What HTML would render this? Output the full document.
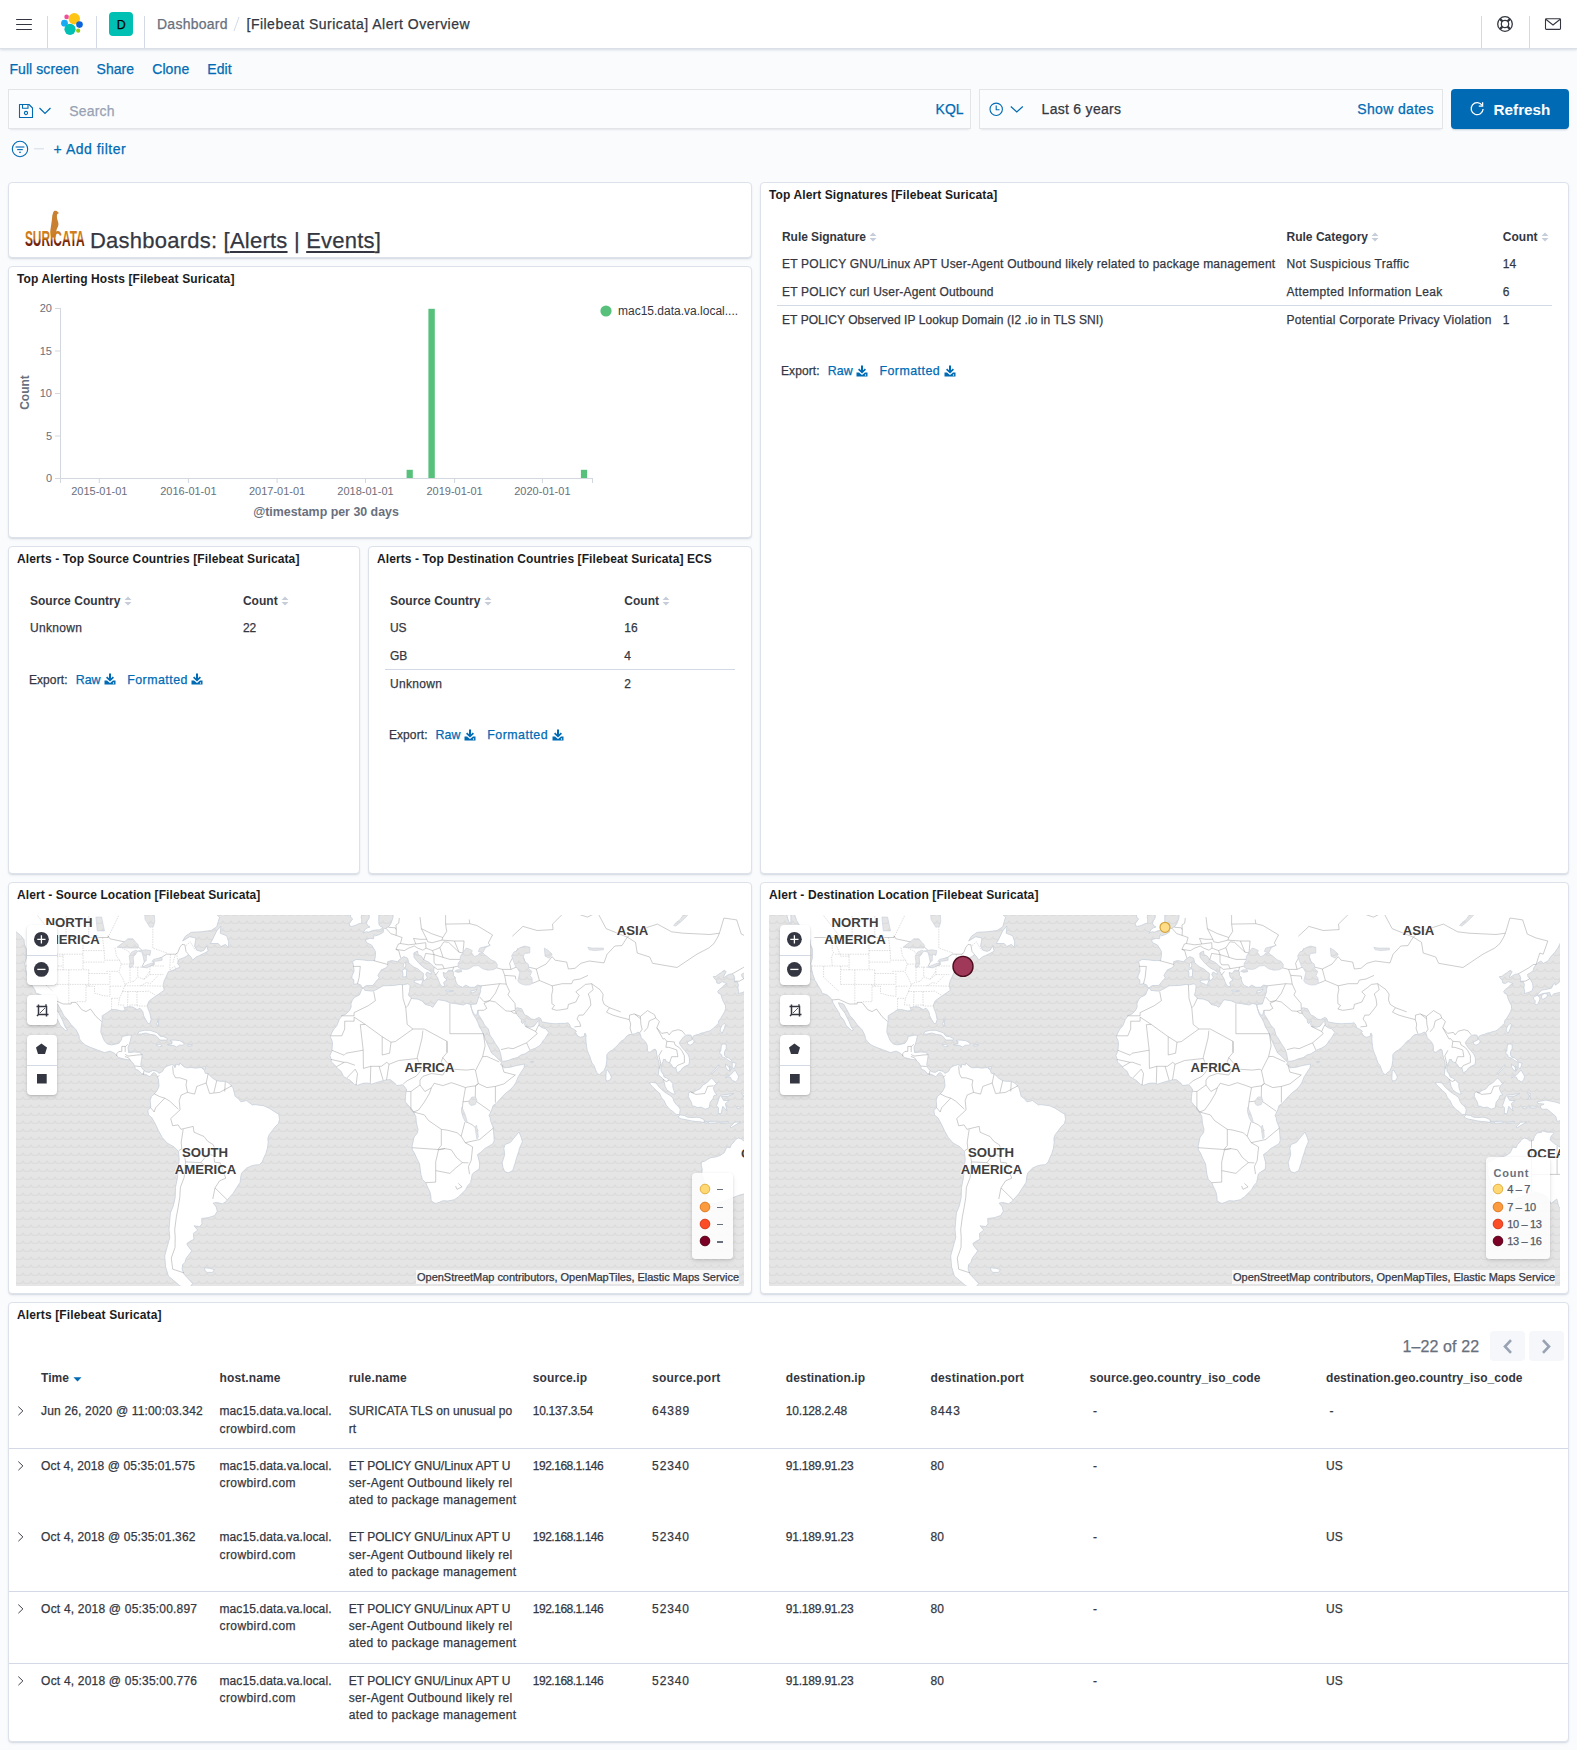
<!DOCTYPE html>
<html><head><meta charset="utf-8">
<style>
html,body{margin:0;padding:0;}
body{width:1577px;height:1750px;overflow:hidden;background:#fafbfd;font-family:"Liberation Sans", sans-serif;position:relative;color:#343741;}
.t{position:absolute;white-space:nowrap;} .r{-webkit-text-stroke:0.25px currentColor;}
.panel{position:absolute;box-sizing:border-box;background:#fff;border:1px solid #dde2ea;border-radius:4px;
box-shadow:0 1px 1px rgba(152,162,179,0.18),0 2px 3px -1px rgba(152,162,179,0.25);}
svg{position:absolute;overflow:visible;}
</style></head><body>

<div style="position:absolute;left:0;top:0;width:1577px;height:49px;background:#fff;border-bottom:1px solid #dbe0e8;box-sizing:border-box;box-shadow:0 1px 2px rgba(152,162,179,0.25),0 2px 3px -1px rgba(152,162,179,0.15)"></div>
<div style="position:absolute;left:16px;top:18.5px;width:16px;height:1.6px;background:#343741;border-radius:1px"></div>
<div style="position:absolute;left:16px;top:23.5px;width:16px;height:1.6px;background:#343741;border-radius:1px"></div>
<div style="position:absolute;left:16px;top:28.5px;width:16px;height:1.6px;background:#343741;border-radius:1px"></div>
<div style="position:absolute;left:47px;top:16px;width:1px;height:32px;background:#d3dae6"></div>
<div style="position:absolute;left:96px;top:16px;width:1px;height:32px;background:#d3dae6"></div>
<div style="position:absolute;left:144px;top:16px;width:1px;height:32px;background:#d3dae6"></div>
<div style="position:absolute;left:1481px;top:16px;width:1px;height:32px;background:#d3dae6"></div>
<div style="position:absolute;left:1529px;top:16px;width:1px;height:32px;background:#d3dae6"></div>
<svg style="left:0;top:0" width="100" height="48">
<circle cx="74.3" cy="18.8" r="5.7" fill="#fec514"/>
<circle cx="66.6" cy="16.9" r="2.3" fill="#f04e98"/>
<circle cx="64.5" cy="23.2" r="3.4" fill="#1ba9f5"/>
<circle cx="79.5" cy="24.6" r="3.3" fill="#0b64dd"/>
<circle cx="70.0" cy="29.3" r="5.6" fill="#00bfb3"/>
<circle cx="78.2" cy="30.7" r="2.1" fill="#93c90e"/>
</svg>
<div style="position:absolute;left:109px;top:12px;width:24px;height:24px;background:#00bfb3;border-radius:4px"></div>
<div class="t r" style="left:121.3px;top:18.5px;font-size:12.4px;line-height:12.4px;color:#000;transform:translateX(-50%);">D</div>
<div class="t r" style="left:157.0px;top:17.1px;font-size:14px;line-height:14px;color:#69707d;letter-spacing:0.252px;">Dashboard</div>
<svg style="left:230px;top:14px" width="12" height="20"><line x1="9" y1="3" x2="4" y2="17" stroke="#d3dae6" stroke-width="1"/></svg>
<div class="t r" style="left:246.5px;top:17.1px;font-size:14px;line-height:14px;color:#343741;letter-spacing:0.489px;">[Filebeat Suricata] Alert Overview</div>
<svg style="left:1495px;top:14px" width="20" height="20" viewBox="0 0 20 20">
<circle cx="10" cy="10" r="7.3" fill="none" stroke="#343741" stroke-width="1.3"/>
<circle cx="10" cy="10" r="3.7" fill="none" stroke="#343741" stroke-width="1.3"/>
<g stroke="#343741" stroke-width="2.2"><line x1="4.9" y1="4.9" x2="7.4" y2="7.4"/><line x1="15.1" y1="4.9" x2="12.6" y2="7.4"/><line x1="4.9" y1="15.1" x2="7.4" y2="12.6"/><line x1="15.1" y1="15.1" x2="12.6" y2="12.6"/></g>
</svg>
<svg style="left:1543px;top:14px" width="20" height="20" viewBox="0 0 20 20">
<rect x="2.5" y="4.8" width="15" height="10.6" rx="0.8" fill="none" stroke="#343741" stroke-width="1.1"/>
<polyline points="2.8,5.2 10,11 17.2,5.2" fill="none" stroke="#343741" stroke-width="1.1"/>
</svg>
<div class="t r" style="left:9.4px;top:62.1px;font-size:14px;line-height:14px;color:#006bb4;letter-spacing:0.083px;">Full screen</div>
<div class="t r" style="left:96.6px;top:62.1px;font-size:14px;line-height:14px;color:#006bb4;letter-spacing:0.01px;">Share</div>
<div class="t r" style="left:152.2px;top:62.1px;font-size:14px;line-height:14px;color:#006bb4;letter-spacing:0.106px;">Clone</div>
<div class="t r" style="left:207.3px;top:62.1px;font-size:14px;line-height:14px;color:#006bb4;letter-spacing:0.059px;">Edit</div>
<div style="position:absolute;left:8px;top:89px;width:963px;height:40px;box-sizing:border-box;background:#fbfcfd;border-radius:0;box-shadow:0 1px 1px -1px rgba(152,162,179,0.2),0 3px 2px -2px rgba(152,162,179,0.2),inset 0 0 0 1px rgba(16,22,26,0.1)"></div>
<svg style="left:18px;top:103px" width="36" height="16" viewBox="0 0 36 16">
<path d="M1.5 1.5 H11 L14.5 5 V14.5 H1.5 Z" fill="none" stroke="#006bb4" stroke-width="1.1" stroke-linejoin="round"/>
<path d="M4.5 1.5 V5.2 H10 V1.5" fill="none" stroke="#006bb4" stroke-width="1.1"/>
<circle cx="8" cy="10" r="1.6" fill="none" stroke="#006bb4" stroke-width="1.1"/>
<polyline points="21.5,5 27,10.5 32.5,5" fill="none" stroke="#006bb4" stroke-width="1.2"/>
</svg>
<div class="t r" style="left:69.3px;top:103.9px;font-size:14px;line-height:14px;color:#98a2b3;letter-spacing:0.168px;">Search</div>
<div class="t r" style="left:935.6px;top:101.9px;font-size:14px;line-height:14px;color:#006bb4;">KQL</div>
<div style="position:absolute;left:979px;top:89px;width:464px;height:40px;box-sizing:border-box;background:#fbfcfd;box-shadow:0 1px 1px -1px rgba(152,162,179,0.2),0 3px 2px -2px rgba(152,162,179,0.2),inset 0 0 0 1px rgba(16,22,26,0.1)"></div>
<svg style="left:988px;top:101px" width="40" height="17" viewBox="0 0 40 17">
<circle cx="8.2" cy="8.3" r="6.2" fill="none" stroke="#006bb4" stroke-width="1.1"/>
<polyline points="8.2,4.5 8.2,8.8 11.5,8.8" fill="none" stroke="#006bb4" stroke-width="1.1"/>
<polyline points="22.8,5.5 28.8,11 34.8,5.5" fill="none" stroke="#006bb4" stroke-width="1.2"/>
</svg>
<div class="t r" style="left:1041.6px;top:101.9px;font-size:14px;line-height:14px;color:#343741;letter-spacing:0.285px;">Last 6 years</div>
<div class="t r" style="left:1357.3px;top:101.9px;font-size:14px;line-height:14px;color:#006bb4;letter-spacing:0.338px;">Show dates</div>
<div style="position:absolute;left:1451px;top:89px;width:118px;height:40px;background:#006bb4;border-radius:4px;box-shadow:0 2px 2px -1px rgba(54,97,126,0.3)"></div>
<svg style="left:1468px;top:100px" width="18" height="18" viewBox="0 0 18 18">
<path d="M14.2 5.5 A6 6 0 1 0 15.1 9" fill="none" stroke="#fff" stroke-width="1.3"/>
<polyline points="14.6,2.3 14.6,6.2 10.8,6.2" fill="none" stroke="#fff" stroke-width="1.3"/>
</svg>
<div class="t" style="left:1493.6px;top:101.5px;font-size:15.3px;line-height:15.3px;font-weight:700;color:#fff;letter-spacing:-0.028px;">Refresh</div>
<svg style="left:10px;top:139px" width="40" height="20" viewBox="0 0 40 20">
<circle cx="10" cy="10" r="7.7" fill="none" stroke="#006bb4" stroke-width="1.1"/>
<line x1="5.6" y1="8" x2="14.4" y2="8" stroke="#006bb4" stroke-width="1.1"/>
<line x1="7.2" y1="10.6" x2="12.8" y2="10.6" stroke="#006bb4" stroke-width="1.1"/>
<line x1="9" y1="13.2" x2="11" y2="13.2" stroke="#006bb4" stroke-width="1.1"/>
<line x1="24" y1="9.8" x2="34" y2="9.8" stroke="#d3dae6" stroke-width="1"/>
</svg>
<div class="t r" style="left:53.6px;top:142.1px;font-size:14px;line-height:14px;color:#006bb4;letter-spacing:0.496px;">+ Add filter</div>
<div class="panel" style="left:8px;top:182px;width:744px;height:76px"></div>
<div class="panel" style="left:8px;top:266px;width:744px;height:272px"></div>
<div class="panel" style="left:760px;top:182px;width:809px;height:692px"></div>
<div class="panel" style="left:8px;top:546px;width:352px;height:328px"></div>
<div class="panel" style="left:368px;top:546px;width:384px;height:328px"></div>
<div class="panel" style="left:8px;top:882px;width:744px;height:412px"></div>
<div class="panel" style="left:760px;top:882px;width:809px;height:412px"></div>
<div class="panel" style="left:8px;top:1302px;width:1561px;height:440px"></div>
<svg style="left:20px;top:205px" width="70" height="46" viewBox="0 0 70 46">
<defs><linearGradient id="sg" x1="0" y1="0" x2="0" y2="1">
<stop offset="0" stop-color="#d98a26"/><stop offset="0.5" stop-color="#c77418"/><stop offset="0.62" stop-color="#7a2a0c"/><stop offset="1" stop-color="#5e0f06"/></linearGradient></defs>
<path d="M33.2 7.5 C33.5 5.8 35.5 5.4 37 6.2 L38.9 7.9 L37.2 9.3 C36.7 11 36.8 13 37.7 15.8 C38.9 18.5 38.7 21 37.1 23.2 C36.4 25 36 28 35.6 30 L35.3 32.5 L31.2 32.5 C30.5 29 30 26 30.7 23 C31.4 19 32.1 14 32.3 10.5 Z" fill="#c98030"/>
<text x="4.9" y="41" font-family="Liberation Sans" font-weight="700" font-size="22.5" textLength="59.8" lengthAdjust="spacingAndGlyphs" fill="url(#sg)">SURICATA</text>
</svg>
<div class="t r" style="left:90.0px;top:230.2px;font-size:22px;line-height:22px;color:#343741;letter-spacing:0.228px;">Dashboards: [<span style="text-decoration:underline;text-decoration-thickness:1.5px;text-underline-offset:3px">Alerts</span> | <span style="text-decoration:underline;text-decoration-thickness:1.5px;text-underline-offset:3px">Events</span>]</div>
<div class="t" style="left:17.0px;top:272.6px;font-size:12px;line-height:12px;font-weight:700;color:#1a1c21;letter-spacing:0.109px;">Top Alerting Hosts [Filebeat Suricata]</div>
<svg style="left:0;top:0" width="760" height="540"><line x1="60.5" y1="308" x2="60.5" y2="483" stroke="#d3d7de" stroke-width="1"/><line x1="60" y1="478.5" x2="593" y2="478.5" stroke="#d3d7de" stroke-width="1"/><line x1="55" y1="308.5" x2="60" y2="308.5" stroke="#d3d7de" stroke-width="1"/><text x="52" y="312" text-anchor="end" font-family="Liberation Sans" font-size="11" fill="#69707d">20</text><line x1="55" y1="351.0" x2="60" y2="351.0" stroke="#d3d7de" stroke-width="1"/><text x="52" y="354.5" text-anchor="end" font-family="Liberation Sans" font-size="11" fill="#69707d">15</text><line x1="55" y1="393.5" x2="60" y2="393.5" stroke="#d3d7de" stroke-width="1"/><text x="52" y="397" text-anchor="end" font-family="Liberation Sans" font-size="11" fill="#69707d">10</text><line x1="55" y1="436.0" x2="60" y2="436.0" stroke="#d3d7de" stroke-width="1"/><text x="52" y="439.5" text-anchor="end" font-family="Liberation Sans" font-size="11" fill="#69707d">5</text><line x1="55" y1="478.5" x2="60" y2="478.5" stroke="#d3d7de" stroke-width="1"/><text x="52" y="482" text-anchor="end" font-family="Liberation Sans" font-size="11" fill="#69707d">0</text><line x1="99.3" y1="478" x2="99.3" y2="483" stroke="#d3d7de" stroke-width="1"/><text x="99.3" y="495" text-anchor="middle" font-family="Liberation Sans" font-size="11" fill="#69707d">2015-01-01</text><line x1="188.4" y1="478" x2="188.4" y2="483" stroke="#d3d7de" stroke-width="1"/><text x="188.4" y="495" text-anchor="middle" font-family="Liberation Sans" font-size="11" fill="#69707d">2016-01-01</text><line x1="277.1" y1="478" x2="277.1" y2="483" stroke="#d3d7de" stroke-width="1"/><text x="277.1" y="495" text-anchor="middle" font-family="Liberation Sans" font-size="11" fill="#69707d">2017-01-01</text><line x1="365.5" y1="478" x2="365.5" y2="483" stroke="#d3d7de" stroke-width="1"/><text x="365.5" y="495" text-anchor="middle" font-family="Liberation Sans" font-size="11" fill="#69707d">2018-01-01</text><line x1="454.6" y1="478" x2="454.6" y2="483" stroke="#d3d7de" stroke-width="1"/><text x="454.6" y="495" text-anchor="middle" font-family="Liberation Sans" font-size="11" fill="#69707d">2019-01-01</text><line x1="542.4" y1="478" x2="542.4" y2="483" stroke="#d3d7de" stroke-width="1"/><text x="542.4" y="495" text-anchor="middle" font-family="Liberation Sans" font-size="11" fill="#69707d">2020-01-01</text><line x1="592.5" y1="478" x2="592.5" y2="483" stroke="#d3d7de" stroke-width="1"/><text x="326" y="516" text-anchor="middle" font-family="Liberation Sans" font-size="12.4" font-weight="700" fill="#69707d">@timestamp per 30 days</text><text transform="translate(29.3,392.5) rotate(-90)" text-anchor="middle" font-family="Liberation Sans" font-size="12" font-weight="700" fill="#69707d">Count</text><rect x="406.6" y="469.8" width="6.199999999999989" height="8.199999999999989" fill="#57c17b"/><rect x="428.4" y="308.8" width="6.400000000000034" height="169.2" fill="#57c17b"/><rect x="580.9" y="469.8" width="6.2000000000000455" height="8.199999999999989" fill="#57c17b"/><circle cx="606" cy="311" r="5.6" fill="#57c17b"/><text x="618" y="315" font-family="Liberation Sans" font-size="12" fill="#343741">mac15.data.va.local....</text></svg>
<div class="t" style="left:769.0px;top:188.6px;font-size:12px;line-height:12px;font-weight:700;color:#1a1c21;letter-spacing:0.107px;">Top Alert Signatures [Filebeat Suricata]</div>
<div class="t" style="left:782.0px;top:230.8px;font-size:12px;line-height:12px;font-weight:700;color:#343741;letter-spacing:-0.052px;">Rule Signature</div>
<svg style="left:869px;top:231.8px" width="8" height="10" viewBox="0 0 8 10"><path d="M0.5 4 L4 0.5 L7.5 4 Z M0.5 6 L4 9.5 L7.5 6 Z" fill="#c6cdd9"/></svg>
<div class="t" style="left:1286.5px;top:230.8px;font-size:12px;line-height:12px;font-weight:700;color:#343741;letter-spacing:0.013px;">Rule Category</div>
<svg style="left:1371px;top:231.8px" width="8" height="10" viewBox="0 0 8 10"><path d="M0.5 4 L4 0.5 L7.5 4 Z M0.5 6 L4 9.5 L7.5 6 Z" fill="#c6cdd9"/></svg>
<div class="t" style="left:1502.8px;top:230.8px;font-size:12px;line-height:12px;font-weight:700;color:#343741;letter-spacing:0.037px;">Count</div>
<svg style="left:1540.5px;top:231.8px" width="8" height="10" viewBox="0 0 8 10"><path d="M0.5 4 L4 0.5 L7.5 4 Z M0.5 6 L4 9.5 L7.5 6 Z" fill="#c6cdd9"/></svg>
<div class="t r" style="left:782.0px;top:257.7px;font-size:12px;line-height:12px;color:#343741;letter-spacing:0.223px;">ET POLICY GNU/Linux APT User-Agent Outbound likely related to package management</div>
<div class="t r" style="left:1286.5px;top:257.7px;font-size:12px;line-height:12px;color:#343741;letter-spacing:0.323px;">Not Suspicious Traffic</div>
<div class="t r" style="left:1502.8px;top:257.7px;font-size:12px;line-height:12px;color:#343741;">14</div>
<div class="t r" style="left:782.0px;top:285.7px;font-size:12px;line-height:12px;color:#343741;letter-spacing:0.197px;">ET POLICY curl User-Agent Outbound</div>
<div class="t r" style="left:1286.5px;top:285.7px;font-size:12px;line-height:12px;color:#343741;letter-spacing:0.335px;">Attempted Information Leak</div>
<div class="t r" style="left:1502.8px;top:285.7px;font-size:12px;line-height:12px;color:#343741;">6</div>
<div class="t r" style="left:782.0px;top:313.7px;font-size:12px;line-height:12px;color:#343741;letter-spacing:0.061px;">ET POLICY Observed IP Lookup Domain (I2 .io in TLS SNI)</div>
<div class="t r" style="left:1286.5px;top:313.7px;font-size:12px;line-height:12px;color:#343741;letter-spacing:0.269px;">Potential Corporate Privacy Violation</div>
<div class="t r" style="left:1502.8px;top:313.7px;font-size:12px;line-height:12px;color:#343741;">1</div>
<div style="position:absolute;left:777px;top:305px;width:775px;height:1px;background:#d3dae6"></div>
<div class="t r" style="left:781.0px;top:365.3px;font-size:12px;line-height:12px;color:#343741;letter-spacing:0.097px;">Export:</div>
<div class="t r" style="left:827.8px;top:365.1px;font-size:12.4px;line-height:12.4px;color:#006bb4;">Raw</div>
<svg style="left:856.3px;top:364.7px" width="12" height="12" viewBox="0 0 12 12"><path d="M5 0.5 H7 V5.2 L8.8 3.5 L10 4.7 L6 8.5 L2 4.7 L3.2 3.5 L5 5.2 Z" fill="#006bb4"/><path d="M0.5 7.5 H3 L6 10 L9 7.5 H11.5 V11.5 H0.5 Z" fill="#006bb4"/><circle cx="9.5" cy="10" r="0.7" fill="#fff"/></svg>
<div class="t r" style="left:879.4px;top:365.1px;font-size:12.4px;line-height:12.4px;color:#006bb4;letter-spacing:0.474px;">Formatted</div>
<svg style="left:943.6px;top:364.7px" width="12" height="12" viewBox="0 0 12 12"><path d="M5 0.5 H7 V5.2 L8.8 3.5 L10 4.7 L6 8.5 L2 4.7 L3.2 3.5 L5 5.2 Z" fill="#006bb4"/><path d="M0.5 7.5 H3 L6 10 L9 7.5 H11.5 V11.5 H0.5 Z" fill="#006bb4"/><circle cx="9.5" cy="10" r="0.7" fill="#fff"/></svg>
<div class="t" style="left:17.0px;top:552.6px;font-size:12px;line-height:12px;font-weight:700;color:#1a1c21;letter-spacing:0.123px;">Alerts - Top Source Countries [Filebeat Suricata]</div>
<div class="t" style="left:29.9px;top:594.8px;font-size:12px;line-height:12px;font-weight:700;color:#343741;letter-spacing:0.045px;">Source Country</div>
<svg style="left:124px;top:595.8px" width="8" height="10" viewBox="0 0 8 10"><path d="M0.5 4 L4 0.5 L7.5 4 Z M0.5 6 L4 9.5 L7.5 6 Z" fill="#c6cdd9"/></svg>
<div class="t" style="left:242.9px;top:594.8px;font-size:12px;line-height:12px;font-weight:700;color:#343741;letter-spacing:0.037px;">Count</div>
<svg style="left:280.5px;top:595.8px" width="8" height="10" viewBox="0 0 8 10"><path d="M0.5 4 L4 0.5 L7.5 4 Z M0.5 6 L4 9.5 L7.5 6 Z" fill="#c6cdd9"/></svg>
<div class="t r" style="left:29.9px;top:622.1px;font-size:12px;line-height:12px;color:#343741;letter-spacing:0.329px;">Unknown</div>
<div class="t r" style="left:242.9px;top:622.1px;font-size:12px;line-height:12px;color:#343741;">22</div>
<div class="t r" style="left:28.9px;top:673.9px;font-size:12px;line-height:12px;color:#343741;letter-spacing:0.097px;">Export:</div>
<div class="t r" style="left:75.7px;top:673.7px;font-size:12.4px;line-height:12.4px;color:#006bb4;">Raw</div>
<svg style="left:104.2px;top:673.3px" width="12" height="12" viewBox="0 0 12 12"><path d="M5 0.5 H7 V5.2 L8.8 3.5 L10 4.7 L6 8.5 L2 4.7 L3.2 3.5 L5 5.2 Z" fill="#006bb4"/><path d="M0.5 7.5 H3 L6 10 L9 7.5 H11.5 V11.5 H0.5 Z" fill="#006bb4"/><circle cx="9.5" cy="10" r="0.7" fill="#fff"/></svg>
<div class="t r" style="left:127.2px;top:673.7px;font-size:12.4px;line-height:12.4px;color:#006bb4;letter-spacing:0.474px;">Formatted</div>
<svg style="left:191.4px;top:673.3px" width="12" height="12" viewBox="0 0 12 12"><path d="M5 0.5 H7 V5.2 L8.8 3.5 L10 4.7 L6 8.5 L2 4.7 L3.2 3.5 L5 5.2 Z" fill="#006bb4"/><path d="M0.5 7.5 H3 L6 10 L9 7.5 H11.5 V11.5 H0.5 Z" fill="#006bb4"/><circle cx="9.5" cy="10" r="0.7" fill="#fff"/></svg>
<div class="t" style="left:377.0px;top:552.6px;font-size:12px;line-height:12px;font-weight:700;color:#1a1c21;letter-spacing:0.099px;">Alerts - Top Destination Countries [Filebeat Suricata] ECS</div>
<div class="t" style="left:389.9px;top:595.0px;font-size:12px;line-height:12px;font-weight:700;color:#343741;letter-spacing:0.045px;">Source Country</div>
<svg style="left:484px;top:596px" width="8" height="10" viewBox="0 0 8 10"><path d="M0.5 4 L4 0.5 L7.5 4 Z M0.5 6 L4 9.5 L7.5 6 Z" fill="#c6cdd9"/></svg>
<div class="t" style="left:624.3px;top:595.0px;font-size:12px;line-height:12px;font-weight:700;color:#343741;letter-spacing:0.037px;">Count</div>
<svg style="left:661.5px;top:596px" width="8" height="10" viewBox="0 0 8 10"><path d="M0.5 4 L4 0.5 L7.5 4 Z M0.5 6 L4 9.5 L7.5 6 Z" fill="#c6cdd9"/></svg>
<div class="t r" style="left:389.9px;top:621.6px;font-size:12px;line-height:12px;color:#343741;">US</div>
<div class="t r" style="left:624.3px;top:621.6px;font-size:12px;line-height:12px;color:#343741;">16</div>
<div class="t r" style="left:389.9px;top:649.6px;font-size:12px;line-height:12px;color:#343741;">GB</div>
<div class="t r" style="left:624.3px;top:649.6px;font-size:12px;line-height:12px;color:#343741;">4</div>
<div class="t r" style="left:389.9px;top:677.6px;font-size:12px;line-height:12px;color:#343741;letter-spacing:0.329px;">Unknown</div>
<div class="t r" style="left:624.3px;top:677.6px;font-size:12px;line-height:12px;color:#343741;">2</div>
<div style="position:absolute;left:385px;top:669px;width:350px;height:1px;background:#d3dae6"></div>
<div class="t r" style="left:388.9px;top:729.4px;font-size:12px;line-height:12px;color:#343741;letter-spacing:0.097px;">Export:</div>
<div class="t r" style="left:435.6px;top:729.2px;font-size:12.4px;line-height:12.4px;color:#006bb4;">Raw</div>
<svg style="left:464.1px;top:728.8px" width="12" height="12" viewBox="0 0 12 12"><path d="M5 0.5 H7 V5.2 L8.8 3.5 L10 4.7 L6 8.5 L2 4.7 L3.2 3.5 L5 5.2 Z" fill="#006bb4"/><path d="M0.5 7.5 H3 L6 10 L9 7.5 H11.5 V11.5 H0.5 Z" fill="#006bb4"/><circle cx="9.5" cy="10" r="0.7" fill="#fff"/></svg>
<div class="t r" style="left:487.3px;top:729.2px;font-size:12.4px;line-height:12.4px;color:#006bb4;letter-spacing:0.474px;">Formatted</div>
<svg style="left:551.5px;top:728.8px" width="12" height="12" viewBox="0 0 12 12"><path d="M5 0.5 H7 V5.2 L8.8 3.5 L10 4.7 L6 8.5 L2 4.7 L3.2 3.5 L5 5.2 Z" fill="#006bb4"/><path d="M0.5 7.5 H3 L6 10 L9 7.5 H11.5 V11.5 H0.5 Z" fill="#006bb4"/><circle cx="9.5" cy="10" r="0.7" fill="#fff"/></svg>
<div class="t" style="left:17.0px;top:888.6px;font-size:12px;line-height:12px;font-weight:700;color:#1a1c21;letter-spacing:0.093px;">Alert - Source Location [Filebeat Suricata]</div>
<div class="t" style="left:769.0px;top:888.6px;font-size:12px;line-height:12px;font-weight:700;color:#1a1c21;letter-spacing:0.114px;">Alert - Destination Location [Filebeat Suricata]</div>
<svg style="left:16px;top:915px" width="728" height="371" viewBox="0 0 728 371">
<defs><pattern id="wvsrc" width="8" height="8" patternUnits="userSpaceOnUse" x="0.05" y="1">
<rect width="8" height="8" fill="#e5e5e5"/>
<path d="M-1.2 4.6 A4 3.1 0 0 0 6.8 4.6 A4 3.1 0 0 0 14.8 4.6" fill="none" stroke="#dcdcdc" stroke-width="1.3"/>
</pattern><clipPath id="clsrc"><rect width="728" height="371"/></clipPath></defs>
<g clip-path="url(#clsrc)">
<rect width="728" height="371" fill="url(#wvsrc)"/>
<path d="M-63.6 -69.4 L-35.2 -31.7 L-21.0 -20.7 L-11.1 -5.2 L-7.4 -0.3 L-5.4 5.4 L-1.1 12.8 L-2.2 15.0 L4.6 20.4 L8.0 24.7 L8.3 29.0 L10.3 33.9 L10.3 43.2 L8.8 48.3 L9.7 54.8 L10.8 59.3 L13.1 65.8 L14.5 67.6 L16.2 70.8 L18.8 74.7 L19.9 78.2 L24.5 79.6 L26.5 80.9 L29.6 84.3 L31.3 88.4 L33.6 92.3 L37.3 98.2 L38.1 100.8 L41.5 104.6 L44.1 110.3 L45.8 111.9 L49.5 115.6 L51.5 115.0 L49.2 111.9 L47.2 106.8 L43.0 98.2 L38.4 92.3 L36.4 87.7 L41.5 89.0 L45.0 95.0 L47.8 100.5 L51.5 104.6 L54.9 109.4 L60.0 114.7 L62.9 120.2 L63.4 123.8 L65.7 126.9 L69.1 129.9 L74.2 132.3 L81.3 134.9 L88.5 137.6 L94.1 136.1 L98.4 138.2 L102.7 142.6 L108.4 144.1 L113.5 144.9 L116.9 147.9 L118.9 151.3 L119.2 154.2 L122.6 155.4 L125.4 158.5 L129.7 159.4 L133.9 161.7 L135.9 159.1 L138.2 157.4 L140.2 159.4 L141.6 162.0 L142.5 164.9 L143.0 171.4 L141.0 175.7 L138.2 179.1 L135.4 181.4 L134.2 185.6 L134.8 192.2 L131.9 195.6 L132.5 199.9 L135.9 202.8 L139.1 208.5 L142.5 215.7 L146.2 222.4 L151.0 228.0 L158.1 231.9 L162.4 236.3 L163.2 243.9 L162.4 253.1 L161.5 262.6 L159.5 272.3 L159.2 282.3 L157.3 290.9 L154.4 298.0 L153.6 307.1 L153.0 314.6 L153.8 322.4 L151.0 332.5 L148.7 340.9 L149.6 351.9 L152.4 361.1 L158.1 365.9 L163.8 370.8 L170.9 373.3 L175.2 370.8 L176.6 368.4 L168.1 359.3 L166.1 354.2 L166.6 349.7 L168.9 347.4 L170.3 343.1 L173.7 338.8 L175.7 335.8 L171.5 330.4 L170.9 328.4 L175.2 325.6 L178.0 324.4 L177.4 318.5 L180.0 316.5 L181.7 315.0 L178.0 310.8 L183.7 311.6 L186.0 308.9 L185.7 303.4 L192.2 302.7 L198.8 300.5 L201.3 296.2 L200.2 291.9 L197.1 288.1 L200.7 287.4 L206.4 288.8 L209.8 286.7 L213.5 282.3 L217.2 278.2 L219.8 273.9 L224.1 267.4 L224.9 261.0 L225.8 257.8 L230.6 253.1 L235.4 250.9 L239.1 250.0 L243.4 249.7 L246.2 246.9 L247.9 242.7 L249.9 238.4 L251.4 233.3 L252.2 227.4 L251.9 223.0 L253.3 219.5 L256.2 215.7 L259.0 212.0 L262.4 208.5 L263.6 204.2 L262.7 199.3 L259.0 197.0 L253.3 193.3 L247.7 190.8 L239.1 189.6 L236.3 189.9 L230.6 185.6 L224.9 186.8 L222.1 183.4 L219.2 181.4 L217.0 172.8 L213.5 168.6 L209.3 166.3 L203.6 166.3 L200.2 165.4 L196.5 163.1 L192.2 158.8 L189.4 158.3 L188.0 154.5 L185.1 152.5 L180.0 153.1 L175.2 152.5 L170.9 152.8 L168.1 151.9 L163.8 147.9 L163.2 150.2 L160.1 149.0 L159.0 152.8 L158.1 150.5 L155.8 149.6 L151.6 151.0 L148.2 153.1 L146.7 156.2 L143.9 158.0 L142.8 158.3 L141.0 156.2 L136.8 155.4 L133.1 157.4 L129.7 156.8 L126.0 153.4 L124.8 149.9 L125.4 145.5 L126.3 139.7 L123.4 137.3 L118.3 137.0 L112.6 137.6 L112.0 132.3 L113.2 129.6 L114.3 126.0 L115.5 120.2 L112.6 120.2 L106.1 121.4 L105.5 124.7 L102.9 128.4 L95.6 129.9 L91.3 129.0 L88.5 126.0 L86.5 121.7 L84.8 117.1 L85.3 110.9 L86.2 106.2 L86.2 100.8 L91.3 97.6 L95.6 94.6 L99.8 94.6 L105.5 95.9 L109.2 95.6 L108.4 92.7 L112.6 91.7 L116.9 92.0 L121.1 94.6 L124.0 93.3 L126.8 96.6 L127.7 100.8 L129.7 104.6 L131.9 108.4 L133.9 108.7 L135.1 104.6 L133.9 98.2 L131.9 93.3 L131.4 90.0 L133.1 86.0 L137.6 82.6 L141.0 80.3 L145.0 77.5 L148.2 75.4 L147.3 69.8 L148.2 65.8 L149.6 62.9 L152.4 56.7 L153.8 56.3 L158.1 54.8 L160.9 53.3 L163.8 52.5 L163.8 51.0 L161.5 48.7 L162.9 44.4 L166.6 43.2 L170.9 41.2 L172.3 39.2 L175.2 42.4 L176.6 45.2 L180.3 42.0 L183.7 40.4 L188.8 38.0 L192.2 36.0 L190.8 31.0 L188.0 35.2 L185.1 36.4 L180.8 35.2 L178.6 31.0 L179.4 26.8 L180.0 23.0 L173.7 21.7 L166.6 26.0 L169.5 21.2 L175.2 17.3 L185.1 16.8 L195.1 15.5 L200.7 11.9 L202.2 6.8 L203.6 2.1 L197.9 -2.8 L189.4 -10.2 L180.8 -20.7 L163.8 -31.7 L78.5 -69.4ZM377.0 -147.5 L377.0 2.6 L376.2 4.9 L375.0 8.2 L373.0 11.4 L369.9 13.2 L367.3 14.1 L367.3 17.3 L363.4 19.5 L359.7 20.8 L358.3 19.5 L357.4 23.8 L354.3 23.4 L349.4 24.7 L350.6 27.7 L355.7 30.2 L357.4 33.1 L359.4 36.4 L359.4 40.8 L358.5 45.6 L352.0 45.6 L346.3 44.8 L340.1 44.4 L336.6 46.4 L337.5 51.0 L338.1 55.9 L336.1 60.7 L335.8 63.3 L337.8 64.8 L337.8 69.4 L341.8 68.7 L344.9 70.1 L345.7 72.6 L347.4 72.6 L350.3 70.5 L356.8 70.5 L359.4 67.3 L361.4 64.8 L363.4 62.9 L361.9 60.4 L365.4 54.8 L369.1 53.3 L371.9 51.0 L371.6 46.7 L375.6 45.6 L381.6 46.7 L384.1 44.0 L387.8 41.6 L391.5 43.2 L392.7 47.5 L394.6 49.5 L397.8 52.1 L402.0 54.0 L404.6 56.3 L407.4 58.5 L407.2 62.6 L407.7 65.8 L410.0 64.4 L411.4 62.2 L409.7 59.6 L411.1 57.0 L415.1 59.3 L415.4 57.4 L412.6 55.2 L408.3 52.9 L406.0 51.0 L402.6 47.9 L398.1 42.4 L397.8 38.0 L401.5 36.0 L402.0 39.6 L405.4 41.2 L407.7 44.8 L412.6 47.1 L415.7 49.5 L418.0 51.8 L417.7 56.3 L419.7 60.0 L421.7 62.9 L423.1 66.9 L424.5 70.1 L426.8 71.6 L428.8 71.2 L427.6 67.6 L429.6 65.8 L431.0 65.1 L428.2 62.2 L427.1 57.4 L430.2 58.5 L432.5 55.2 L436.7 55.5 L437.6 58.2 L437.3 60.4 L439.3 62.2 L439.3 64.8 L440.4 68.0 L442.4 70.5 L446.7 72.3 L449.8 70.1 L453.8 72.3 L458.6 72.3 L461.5 70.1 L465.4 70.8 L464.6 74.4 L464.6 76.5 L463.7 79.2 L462.3 83.3 L461.2 86.7 L460.3 89.0 L454.6 89.4 L455.5 93.7 L457.5 98.2 L460.2 100.7 L460.9 99.2 L462.0 95.0 L462.3 99.5 L463.7 101.4 L466.6 106.2 L468.6 110.0 L472.3 114.0 L474.0 120.2 L477.1 124.7 L479.4 128.7 L482.8 133.7 L484.5 138.2 L485.0 141.1 L485.9 145.5 L486.5 146.4 L489.3 146.1 L492.2 145.5 L496.4 143.8 L501.3 142.6 L505.0 140.0 L509.2 138.8 L511.2 137.3 L514.9 134.9 L520.0 132.9 L523.4 130.8 L525.7 128.1 L527.1 125.7 L529.1 123.5 L532.8 117.4 L529.7 113.7 L526.3 112.8 L523.4 110.9 L522.9 107.8 L523.1 105.3 L522.3 105.9 L520.6 107.8 L518.0 111.2 L514.9 112.2 L511.8 111.9 L509.5 111.5 L508.6 109.4 L509.2 105.9 L508.1 106.2 L506.9 108.7 L505.5 107.5 L505.2 104.6 L503.5 102.7 L501.3 100.1 L500.1 98.2 L499.0 95.3 L499.8 93.3 L501.5 92.7 L503.5 93.3 L505.5 93.7 L507.2 96.9 L508.6 99.8 L512.1 101.4 L515.5 104.0 L518.6 104.6 L521.2 103.3 L522.9 102.4 L524.9 103.7 L525.7 106.8 L529.1 107.5 L532.2 108.1 L537.9 108.7 L540.5 108.7 L544.8 108.4 L549.0 108.4 L552.1 107.8 L553.8 110.0 L554.7 112.8 L556.7 113.7 L557.5 114.0 L560.4 116.2 L559.5 117.4 L561.8 121.1 L564.4 122.3 L568.1 121.4 L568.9 118.0 L570.1 120.2 L569.8 123.8 L570.1 127.5 L570.6 131.7 L571.2 135.2 L572.6 138.8 L573.8 141.4 L574.9 144.9 L576.0 148.1 L578.0 150.5 L579.4 154.2 L580.6 157.4 L583.1 159.7 L585.1 157.7 L587.7 156.2 L589.1 153.1 L590.0 150.5 L590.8 145.5 L590.8 139.7 L593.1 137.0 L596.5 134.9 L599.6 132.3 L602.2 129.6 L605.0 126.3 L608.7 124.1 L610.1 121.7 L613.0 119.6 L615.8 119.3 L619.2 118.7 L622.1 117.1 L623.8 118.0 L624.9 121.1 L625.2 122.6 L627.5 125.1 L629.5 126.9 L631.2 130.2 L631.5 135.8 L632.3 137.0 L634.0 137.3 L636.6 135.2 L639.1 134.0 L640.3 135.8 L640.6 139.1 L641.7 143.2 L643.1 147.9 L643.1 152.5 L642.6 157.1 L642.3 160.0 L644.3 161.4 L647.1 164.0 L648.2 167.1 L649.1 171.4 L650.8 174.8 L654.2 177.4 L657.1 179.1 L659.3 178.8 L657.9 175.7 L656.8 171.7 L656.8 168.6 L653.6 165.1 L650.8 163.1 L648.2 162.0 L647.1 159.1 L645.1 156.2 L644.8 153.1 L646.0 149.0 L647.1 146.4 L647.4 144.4 L649.7 144.6 L649.9 146.4 L653.6 147.9 L655.3 149.6 L657.1 152.5 L659.9 153.1 L661.3 158.0 L665.0 155.4 L666.4 153.1 L669.6 151.0 L673.0 149.6 L673.5 146.1 L673.3 142.6 L671.8 139.1 L668.7 135.5 L666.1 132.6 L663.9 129.3 L663.3 127.5 L665.6 124.4 L668.1 121.4 L671.3 119.9 L675.0 120.2 L676.1 124.1 L677.2 121.1 L679.2 120.2 L682.6 119.3 L685.5 118.0 L687.5 117.7 L691.2 116.5 L694.0 115.9 L696.9 113.7 L699.7 110.9 L702.5 108.4 L702.8 105.6 L704.8 103.3 L706.8 99.8 L708.5 96.9 L709.6 93.7 L709.4 90.4 L707.9 87.7 L706.5 84.7 L704.8 79.2 L702.5 78.2 L701.7 76.5 L703.4 74.4 L706.0 72.6 L708.2 70.1 L711.1 68.7 L708.5 67.6 L706.2 66.6 L703.4 68.4 L700.8 68.0 L700.5 65.8 L697.7 62.6 L697.4 61.5 L699.7 61.5 L702.5 59.3 L705.4 57.4 L708.2 55.2 L710.2 56.7 L708.2 60.0 L707.4 62.9 L708.8 62.2 L710.5 60.7 L713.3 59.3 L716.2 58.9 L717.6 60.0 L718.7 63.3 L718.2 66.9 L721.3 66.9 L722.4 69.4 L721.9 73.0 L722.7 76.5 L722.2 78.5 L725.3 77.8 L728.1 76.8 L730.4 75.4 L731.0 72.3 L730.7 68.7 L728.7 64.8 L725.9 61.5 L725.6 59.3 L728.4 57.8 L731.5 55.2 L731.8 52.9 L734.1 49.5 L735.8 47.9 L738.9 46.0 L741.5 48.3 L746.0 46.0 L748.9 41.6 L752.9 37.2 L756.0 32.7 L758.5 27.7 L761.7 23.4 L762.5 16.8 L764.8 7.7 L763.7 2.1 L775.0 -31.7 L775.0 -147.5ZM346.0 73.7 L343.5 79.9 L338.6 82.3 L336.4 85.0 L334.9 89.0 L335.2 91.7 L333.5 95.6 L330.1 98.9 L326.1 100.5 L323.3 104.6 L320.7 110.9 L317.9 114.0 L315.9 117.7 L314.2 121.7 L315.9 125.4 L316.5 127.8 L315.9 135.8 L313.9 140.5 L315.0 143.8 L315.3 147.0 L318.7 149.9 L320.2 151.9 L322.4 154.2 L325.0 156.2 L327.5 161.4 L330.7 163.4 L333.8 165.1 L338.6 169.4 L341.5 170.3 L347.2 168.3 L351.4 168.0 L355.7 169.1 L360.0 167.7 L365.6 166.0 L370.5 164.9 L374.2 164.6 L378.7 168.0 L380.7 170.6 L383.3 170.3 L386.4 169.7 L388.4 171.4 L390.7 174.8 L389.8 178.5 L389.5 181.4 L389.2 186.8 L393.5 191.6 L396.3 194.8 L399.8 201.3 L400.3 207.1 L401.2 211.4 L402.0 214.3 L401.5 217.7 L398.1 222.1 L396.1 231.0 L396.3 234.8 L398.3 237.8 L400.9 243.6 L403.5 248.8 L404.9 259.4 L406.3 264.2 L409.7 267.7 L411.7 272.3 L414.0 277.2 L414.8 280.9 L415.1 285.7 L418.0 287.8 L419.9 288.4 L423.9 287.1 L427.1 285.7 L431.9 286.0 L435.6 285.3 L438.4 284.7 L442.4 281.9 L445.5 278.9 L449.5 274.9 L451.8 270.6 L454.6 267.7 L456.3 259.1 L458.0 257.5 L463.2 254.1 L463.7 250.0 L463.4 246.9 L461.5 239.6 L464.9 237.2 L469.1 233.3 L476.8 228.9 L478.2 225.9 L477.9 220.1 L477.1 212.2 L474.5 205.6 L474.2 202.8 L473.1 200.5 L475.7 195.0 L477.1 190.5 L480.2 188.5 L482.2 186.2 L486.5 181.4 L489.9 178.0 L494.1 174.8 L497.6 171.1 L499.8 167.7 L502.4 161.4 L506.7 154.8 L508.1 152.5 L508.6 149.0 L502.4 150.2 L498.7 151.0 L494.7 152.2 L487.9 152.8 L485.9 149.9 L484.5 149.6 L485.6 147.3 L483.3 144.9 L481.1 142.9 L478.8 140.5 L475.7 138.2 L472.3 130.8 L468.8 123.2 L468.3 120.8 L464.9 114.0 L463.7 112.5 L462.0 107.8 L460.0 103.7 L457.2 99.2 L455.5 93.7 L454.6 89.4 L450.4 88.4 L447.2 90.0 L439.8 88.7 L434.4 88.0 L428.8 85.7 L421.9 84.7 L419.7 88.0 L416.8 92.3 L414.3 90.7 L409.1 89.4 L406.3 86.0 L401.2 84.0 L396.9 83.7 L394.4 82.3 L392.4 79.9 L393.5 76.5 L394.1 70.8 L392.1 68.7 L387.2 69.8 L384.1 69.4 L377.6 70.5 L367.1 70.8 L359.4 75.1 L356.5 76.1 L348.9 75.4 L347.7 73.3ZM503.0 217.0 L505.5 223.0 L506.4 226.8 L503.5 233.3 L502.7 236.6 L500.7 242.4 L499.0 248.5 L496.7 255.6 L492.4 257.8 L488.7 256.6 L487.0 252.5 L486.2 247.6 L488.7 239.6 L487.9 233.3 L489.0 229.5 L494.4 227.4 L499.0 221.8ZM346.9 18.2 L350.0 16.8 L352.8 17.1 L356.5 15.5 L360.0 15.0 L363.7 14.8 L365.6 13.7 L366.8 12.3 L364.5 11.4 L363.4 10.3 L362.8 8.2 L362.8 -2.8 L353.4 -2.8 L353.1 3.0 L351.1 6.3 L350.6 8.7 L352.0 11.0 L354.0 11.9 L351.7 12.8 L349.7 13.7 L346.9 18.2ZM345.7 8.2 L345.7 4.5 L345.2 2.1 L345.7 -0.3 L347.2 -2.8 L345.7 -6.2 L341.8 -6.7 L338.6 -3.7 L334.4 -1.3 L334.7 2.1 L336.6 4.0 L334.9 6.3 L333.2 8.7 L333.8 11.0 L335.8 11.4 L339.2 10.5 L342.9 8.7ZM685.2 250.0 L685.5 246.9 L688.6 246.3 L691.2 244.5 L694.6 242.7 L700.5 241.8 L704.0 240.5 L708.2 237.8 L710.8 232.2 L714.2 232.7 L715.3 229.8 L717.9 227.1 L719.6 224.5 L722.4 223.0 L726.1 224.2 L727.3 225.9 L731.3 225.6 L732.4 221.5 L734.9 218.0 L739.8 217.2 L739.8 215.7 L745.2 217.2 L751.2 217.2 L751.7 218.6 L749.2 221.0 L748.0 224.8 L752.3 228.6 L759.4 233.0 L763.1 233.0 L765.4 219.5 L767.9 213.4 L773.6 223.9 L776.5 230.4 L778.7 237.5 L785.8 241.8 L792.7 252.5 L797.8 256.9 L797.8 275.6 L792.7 285.3 L789.0 298.0 L778.7 303.4 L770.8 302.7 L760.8 298.0 L756.6 291.2 L754.8 284.0 L749.2 288.4 L744.3 281.3 L735.2 277.2 L723.9 279.9 L715.3 283.3 L709.6 285.7 L699.7 288.4 L692.6 288.8 L689.7 286.7 L691.7 280.6 L689.7 272.3 L687.5 263.5 L685.5 259.4 L686.3 254.7ZM121.4 119.0 L123.1 116.5 L128.3 115.3 L133.9 115.3 L141.0 117.7 L143.9 121.1 L147.9 121.7 L151.8 123.8 L151.0 125.1 L143.9 125.1 L141.9 122.6 L139.6 120.2 L133.9 119.3 L129.7 118.0 L125.4 119.0ZM154.1 125.4 L156.1 125.1 L159.0 125.1 L163.8 125.7 L166.6 127.2 L168.3 129.0 L167.2 130.2 L163.5 130.2 L160.4 132.0 L157.8 130.5 L153.8 130.5 L151.3 129.6 L155.8 129.0 L156.1 126.6 L154.1 126.0ZM140.2 129.6 L144.2 129.6 L146.2 131.1 L143.3 131.7 L140.2 130.2ZM171.8 129.3 L176.3 129.6 L176.0 130.8 L171.8 131.1ZM194.2 28.5 L196.5 24.7 L200.7 15.9 L205.0 11.0 L204.2 18.2 L210.7 20.8 L212.7 26.8 L212.4 32.3 L209.3 29.4 L205.0 31.5 L202.2 28.5ZM188.5 352.8 L193.6 353.3 L198.5 354.6 L196.5 357.4 L190.8 357.4 L188.8 355.1ZM140.5 108.7 L141.9 111.9 L142.5 107.8 L141.3 104.3 L143.3 104.6ZM186.8 151.9 L189.7 151.9 L189.4 153.9 L186.8 153.9ZM-15.3 -0.3 L-11.1 -0.3 L-11.1 8.2 L-13.3 6.8ZM386.7 62.2 L390.4 61.5 L390.7 54.8 L389.0 53.7 L386.1 55.2 L387.0 58.5ZM389.0 53.3 L389.8 50.2 L389.5 47.1 L387.5 48.7 L387.2 51.4ZM398.1 65.5 L400.9 65.1 L407.2 64.8 L405.7 68.7 L405.7 70.5 L403.5 69.4 L398.3 67.3ZM429.6 75.4 L431.9 75.1 L437.6 75.8 L436.1 76.5 L431.0 76.8ZM454.6 77.5 L456.6 77.8 L459.5 76.5 L461.2 74.0 L457.8 75.4 L454.9 76.1ZM589.8 165.1 L590.2 156.0 L591.4 154.8 L593.7 158.5 L595.4 162.0 L594.5 164.6 L591.9 166.0ZM633.7 167.1 L640.0 168.0 L643.1 172.0 L647.7 176.3 L650.5 178.3 L653.6 180.2 L656.8 182.8 L657.9 186.2 L660.2 189.6 L663.0 191.9 L664.2 194.5 L663.6 199.3 L660.2 199.6 L657.1 196.7 L653.6 194.2 L650.2 190.2 L648.0 185.6 L645.4 182.5 L643.4 178.0 L640.6 175.7 L637.1 172.3 L634.3 169.4ZM661.9 202.2 L664.2 199.9 L668.4 200.5 L671.5 202.2 L677.0 202.5 L680.4 202.2 L683.2 202.5 L688.0 204.5 L688.3 207.6 L684.1 206.8 L679.8 206.5 L675.5 205.9 L671.3 205.0 L665.6 203.9 L662.7 202.5ZM688.0 205.9 L691.7 206.8 L690.3 207.9ZM692.6 206.5 L701.1 206.2 L701.1 207.9 L692.6 208.2ZM703.4 207.1 L712.5 206.5 L711.9 207.9 L703.7 207.9ZM713.9 212.0 L718.7 207.3 L724.7 206.8 L718.2 210.8 L715.3 212.5ZM672.4 178.3 L674.4 176.8 L677.0 178.0 L679.8 175.7 L684.1 173.7 L686.9 170.0 L690.6 168.0 L692.9 165.7 L695.4 163.1 L697.4 164.6 L700.3 168.6 L701.7 167.7 L698.8 170.3 L697.4 173.1 L698.3 176.3 L700.8 180.0 L698.0 180.5 L696.9 183.7 L694.3 187.1 L693.7 189.6 L693.2 192.8 L689.2 194.2 L685.5 192.2 L681.2 192.5 L678.4 191.3 L676.1 191.0 L675.5 187.6 L673.5 183.9 L672.4 181.7ZM702.3 198.5 L702.5 192.8 L700.5 190.8 L703.4 182.2 L704.8 180.2 L717.9 178.5 L712.5 181.1 L705.4 181.4 L707.7 185.6 L713.3 185.4 L709.4 188.5 L711.1 196.2 L706.8 191.3 L705.1 198.7ZM735.2 186.8 L743.8 185.1 L753.7 187.1 L763.7 190.2 L777.0 195.0 L782.1 199.9 L777.9 205.6 L789.2 212.8 L780.7 211.4 L770.8 208.5 L767.9 209.4 L763.7 209.1 L758.0 205.6 L755.1 206.5 L753.7 201.3 L745.2 194.2 L739.5 194.2 L738.1 190.8 L742.1 189.1 L735.8 188.5ZM725.3 177.7 L728.4 178.5 L727.3 182.2 L725.6 184.5 L729.0 183.4ZM721.0 191.6 L724.4 192.2 L723.9 193.9 L721.0 193.3ZM728.1 191.0 L734.1 191.3 L734.1 193.0 L728.1 192.8ZM705.7 129.3 L707.7 129.0 L710.2 129.3 L710.2 133.4 L708.5 136.7 L708.5 140.2 L710.2 142.3 L712.5 142.9 L715.6 145.5 L714.5 146.7 L712.2 145.2 L709.1 142.9 L705.7 141.7 L706.0 140.2 L704.0 138.8 L703.4 135.8 L704.8 136.4 L705.1 132.0ZM709.6 163.1 L710.2 161.1 L713.9 160.6 L715.0 159.4 L719.0 155.1 L719.9 156.5 L722.7 161.4 L721.6 164.9 L719.6 166.9 L715.6 164.9 L714.5 162.3 L711.9 161.7ZM716.2 147.0 L720.2 148.4 L718.2 153.9 L716.2 151.9ZM709.4 149.0 L713.1 152.2 L713.9 156.5 L711.1 154.5 L709.6 151.9ZM713.6 150.8 L715.6 153.4 L714.5 155.4ZM696.0 159.1 L702.8 151.6 L702.5 149.9 L695.4 158.3ZM704.2 115.6 L706.0 118.7 L708.5 113.1 L709.4 109.4 L708.2 108.4 L706.0 110.6 L704.5 113.4ZM671.5 126.9 L676.7 124.4 L678.4 126.0 L677.0 128.7 L674.1 130.2 L671.8 129.3ZM731.3 82.3 L735.2 80.3 L737.8 82.6 L737.8 85.0 L736.1 88.7 L734.1 90.0 L733.0 88.7 L733.2 85.7 L731.8 84.3ZM739.5 83.3 L740.9 84.3 L744.6 82.3 L745.8 79.2 L742.3 78.5 L739.8 80.3ZM734.9 79.9 L739.8 75.1 L742.3 74.7 L749.4 73.3 L751.4 69.4 L752.9 67.6 L753.1 70.1 L756.6 68.0 L760.8 60.0 L762.5 54.0 L765.1 57.0 L766.5 60.4 L763.7 67.6 L763.1 74.0 L760.5 76.5 L757.4 77.5 L751.7 78.9 L748.9 81.6 L747.7 77.5 L740.9 78.5 L736.1 80.3ZM760.8 52.9 L765.1 49.1 L770.2 51.0 L776.5 46.0 L772.2 42.8 L765.7 37.6 L764.8 45.2 L760.8 47.9ZM514.3 146.7 L517.7 146.4 L516.9 147.6 L514.9 147.6Z" fill="#fff" stroke="#c6cfdb" stroke-width="0.8"/>
<path d="M12.3 22.5 L92.1 22.5 L92.1 20.8 L93.9 23.8 L108.1 26.8 L121.7 31.5 L123.7 33.1 L128.5 38.0 L128.3 47.1 L126.5 50.6 L127.7 52.1 L138.2 49.8 L137.6 45.6 L145.6 42.4 L150.4 39.2 L159.5 39.2 L161.8 37.6 L163.8 32.3 L166.1 29.4 L168.9 29.8 L170.0 36.4 L172.0 38.8M29.9 85.0 L36.7 84.3 L47.2 89.0 L55.2 89.0 L55.2 87.4 L60.0 87.4 L65.7 94.6 L70.0 96.6 L74.5 94.0 L79.9 101.4 L85.6 106.5M100.7 141.1 L100.7 138.8 L102.9 136.4 L105.8 136.4 L105.8 131.4 L109.5 131.4 L111.8 129.3M109.2 131.4 L109.2 137.0M108.9 141.4 L112.6 142.9 L114.6 145.5M109.2 139.4 L112.0 141.1 L121.1 140.0 L126.3 139.7M119.2 151.0 L124.8 151.6M127.1 160.0 L128.0 155.7M143.3 160.3 L141.3 162.3M156.7 151.3 L157.3 158.5 L159.5 162.8 L163.8 162.8 L170.9 165.1 L170.0 170.0 L171.5 177.4 L165.2 180.0 L163.2 185.6 L164.1 194.8M138.2 178.8 L143.9 181.7 L148.7 183.1 L153.8 186.2 L162.4 194.2M134.5 192.5 L138.2 197.0 L139.6 192.8 L148.7 183.1M192.2 158.5 L190.2 168.0 L180.8 171.4 L178.6 179.1 L171.5 177.4M200.7 165.7 L197.9 177.7M209.3 166.6 L208.7 176.5M190.2 168.0 L193.6 178.5 L203.6 177.4 L215.8 170.8M164.1 194.8 L154.7 203.6 L156.7 210.8 L162.1 209.9 L164.9 214.3 L177.2 211.4 L178.0 217.2 L188.0 221.5 L191.7 226.2 L197.3 229.8 L199.3 234.8 L197.9 240.9 L198.5 247.2 L204.4 247.9 L207.6 257.8 L209.8 263.2 L203.6 265.8 L199.0 272.9 L211.0 284.7M167.2 214.3 L165.2 227.4 L165.8 233.6 L162.7 235.7M165.8 233.6 L168.3 239.0 L169.5 246.9 L176.0 247.2 L184.8 247.6 L192.2 238.7 L197.9 240.9M169.5 246.9 L168.9 254.7 L168.1 262.6 L164.4 272.3 L163.8 282.3 L162.1 292.6 L160.4 301.6 L158.7 314.6 L159.2 322.4 L159.0 332.5 L155.3 343.1 L156.7 354.2 L168.1 357.9M184.8 247.6 L199.0 257.2 L207.6 257.8M196.8 284.0 L199.0 272.9M357.7 76.5 L359.4 85.7 L352.3 90.7 L338.1 97.6 L338.1 100.8 L325.3 100.8M338.1 102.1 L338.1 106.2 L328.7 106.2 L328.7 114.0 L325.8 120.8 L314.5 120.8M338.1 102.1 L349.2 109.4 L344.3 109.7 L347.2 135.2 L330.1 138.2 L328.1 140.2 L315.6 135.2M349.2 109.4 L366.2 121.7 L375.0 127.2 L379.3 126.6 L396.9 114.0M386.4 69.8 L387.0 83.3 L389.8 92.7 L391.2 109.4 L396.9 114.0M395.5 83.0 L391.8 90.7 L389.8 92.7M433.9 88.4 L433.9 118.7M433.9 118.7 L467.4 118.7M396.9 114.0 L408.3 114.0 L431.0 126.3 L431.0 137.6 L426.8 142.6 L425.3 146.7 L429.6 155.7 L426.8 160.0 L415.4 158.5 L406.9 161.4 L404.0 165.1 L404.0 170.0 L408.9 176.5 L415.4 172.8M406.9 115.6 L406.0 123.2 L401.2 142.6 L402.6 147.0 L405.4 154.2 L402.6 158.5 L399.8 161.4 L396.3 163.1 L391.2 165.7 L387.2 169.1M373.0 149.3 L382.7 145.5 L401.2 143.5M373.0 149.3 L370.5 164.9M363.1 151.3 L367.1 165.1M354.3 168.3 L354.8 151.3M340.1 170.0 L341.5 158.5 L339.2 154.2 L331.0 162.8M347.2 135.2 L347.4 153.4 L354.8 151.3 L365.4 151.3 L370.8 147.3 L373.0 149.3M366.2 121.7 L366.2 140.0 L373.6 138.2 L375.0 127.2M315.0 144.4 L327.8 147.3 L330.7 147.3 L338.9 150.2M320.2 151.9 L328.1 147.3M431.0 126.3 L431.0 137.6M426.8 142.6 L436.7 154.2 L450.4 155.1 L458.0 154.2 L459.5 155.7 L462.3 168.6 L459.5 170.8 L451.5 172.0M467.4 118.7 L469.1 130.8 L466.6 141.7 L470.8 141.4 L483.3 147.0M466.6 141.7 L459.5 155.7M459.5 170.8 L462.3 168.6 L470.8 172.6 L479.4 171.4 L487.9 168.9 L499.3 160.0 L499.0 160.0 L487.9 157.1 L485.9 149.9M479.4 171.4 L479.4 187.6M459.5 170.8 L459.2 185.6 L474.2 196.2M451.5 172.0 L449.5 172.6 L447.0 186.8 L446.1 195.6 L449.5 206.5 L456.6 209.9M447.0 186.8 L459.2 185.6M397.5 197.0 L408.3 199.9 L412.6 205.6 L425.3 214.3 L431.0 215.1 L441.0 217.7 L445.2 221.2 L448.9 207.1M449.5 172.6 L442.4 170.0 L435.3 167.7 L426.8 170.6 L418.2 168.3 L415.4 172.8 L413.4 178.5 L408.3 187.1 L402.6 195.0 L397.5 197.0M404.0 170.0 L394.9 176.5 L390.7 176.3M394.9 176.5 L394.9 194.2 L397.5 197.0M396.3 232.7 L421.9 234.5 L429.0 233.6M425.3 214.3 L425.3 230.4 L421.9 234.5M409.7 267.7 L419.7 267.1 L419.7 255.6 L419.7 246.9 L422.5 234.8 L429.0 233.6M419.7 255.6 L433.9 258.4 L439.6 253.1 L446.4 247.6 L440.4 242.4 L435.3 234.8 L429.0 233.6M453.5 259.1 L452.4 251.6 L455.2 245.4 L456.6 231.9 L449.2 227.7 L463.7 224.5 L477.7 212.8M446.4 247.6 L452.4 247.9M445.2 221.2 L449.2 227.7M456.6 209.9 L462.3 215.7M442.4 268.4 L446.1 271.9 L441.0 274.3 L439.6 271.0M337.2 51.4 L344.3 51.4 L343.2 62.2 L341.5 68.7M357.7 45.6 L371.9 49.5M369.9 13.2 L374.7 18.6 L380.1 20.4 L386.1 22.5 L384.4 28.5 L382.4 29.0 L379.9 34.4 L382.7 35.6 L384.7 42.8M380.1 20.4 L380.4 14.6 L379.9 10.1 L382.7 8.2 L383.3 3.0M372.5 12.3 L379.3 12.8 L379.9 14.6M384.4 28.5 L392.7 29.8 L399.8 29.0 L397.5 23.4 L404.0 24.3 L410.8 24.3 L405.4 13.7M379.9 34.4 L388.4 35.6 L392.7 33.1 L398.3 31.0 L401.7 33.1M404.0 2.1 L405.4 13.7 L415.4 18.6 L426.8 22.5 L430.7 16.4 L429.6 9.1 L429.6 0.2M399.8 29.0 L409.7 27.7M410.8 24.3 L411.7 26.8 L416.2 27.7 L425.9 25.1 L426.8 22.5M409.7 27.7 L410.0 33.1 L416.5 35.6 L423.9 32.7 L427.9 26.8M401.7 33.1 L406.9 35.2 L410.0 33.1M425.9 25.1 L438.4 26.0 L443.0 37.2 L447.0 38.0M423.9 32.7 L427.1 42.4 L433.9 44.4 L444.1 44.4M427.9 26.8 L432.5 27.3 L443.0 37.2M429.6 9.1 L453.8 8.7 L460.9 10.5 L476.5 19.9 L472.3 28.1 L474.2 30.2M438.4 26.0 L448.1 26.0 L447.0 37.6M416.5 35.6 L418.0 39.6 L427.1 42.4M407.7 44.8 L409.7 38.4 L418.0 39.6 L418.0 47.1 L419.7 49.8 L426.5 49.8 L428.2 53.7 L437.6 52.1 L442.4 51.0M418.0 51.8 L421.4 54.4 L428.2 53.7M419.7 60.0 L422.5 56.3M437.6 52.1 L436.7 55.5M429.6 0.2 L436.7 -7.7 L443.0 -10.7M453.8 8.7 L453.2 4.5M465.4 70.8 L483.6 68.7 L490.2 69.1 L488.7 60.4 L486.5 54.4 L480.8 52.9M490.2 69.1 L493.6 76.5 L491.9 79.9 L499.0 88.4 L499.3 93.7M483.6 68.7 L479.4 78.2 L473.7 85.7 L468.0 86.7 L463.7 82.0M473.7 85.7 L468.0 88.4 L470.8 93.3 L467.7 95.3 L462.3 95.3M499.0 95.3 L495.0 96.3 L489.9 95.9 L479.4 87.0 L473.7 85.7M495.0 96.3 L497.8 98.2 L500.7 98.2M485.0 134.6 L492.2 132.9 L497.0 133.7 L510.6 127.8 L521.2 118.7 L519.7 116.5 L509.5 111.5M510.6 127.8 L513.8 134.9M523.1 109.7 L521.4 112.5 L519.7 116.5M488.7 60.4 L499.3 61.1 L499.8 64.4M486.5 54.4 L495.0 54.4 L493.6 48.3 L496.4 43.2M495.0 54.4 L501.0 51.8M516.3 68.4 L523.4 65.5 L536.2 70.8 L536.8 74.7 L535.7 79.9 L535.9 88.7 L538.5 90.4 L535.9 94.0 L540.5 95.3 L543.6 95.0 L551.6 93.7 L552.4 89.4 L559.8 87.0 L563.2 80.3 L559.8 76.8 L565.5 72.6 L569.5 69.4 L575.7 68.7M536.2 70.8 L546.2 68.7 L555.6 68.7 L557.3 65.1 L564.1 64.0 L572.0 60.4M523.4 65.5 L520.3 54.0 L530.0 49.1 L536.2 41.6 L539.1 45.2 L550.7 47.1 L552.4 54.0 L559.0 53.3 L564.9 48.3 L573.2 46.0 L588.0 47.9 L591.1 39.2 L598.8 31.0 L605.9 30.6 L611.3 22.1M505.5 38.0 L511.2 51.8 L520.3 54.0M496.4 43.2 L502.1 33.1M496.4 21.2 L506.9 11.4 L521.2 15.5 L537.1 14.6 L536.5 9.1 L550.4 -4.7 L571.5 2.1 L581.4 -2.8 L590.2 13.7 L611.3 22.1M611.3 22.1 L618.7 16.4 L641.4 9.1 L655.6 16.8 L667.0 18.2 L694.0 19.5 L703.4 18.2 L701.7 22.1 L698.0 28.5 L692.6 33.1 L680.9 39.2 L661.0 52.5 L636.6 48.3 L633.7 42.0 L621.2 38.0 L619.5 27.3 L611.3 22.1M703.4 18.2 L707.9 3.0 L720.7 4.9 L725.3 19.1 L734.1 23.0 L745.8 26.0 L741.2 39.2 L737.8 38.0 L734.1 49.5M716.2 58.9 L726.7 52.9 L731.5 49.5 L734.1 49.5M718.7 66.2 L723.3 66.2 L727.8 63.7M575.7 68.7 L584.0 74.7 L587.1 79.2 L586.5 85.0 L588.2 89.4 L593.4 92.7 L590.5 97.2 L596.8 100.1 L603.6 102.1 L613.3 104.6 L613.6 100.1 L618.1 98.9 L624.4 101.4 L631.5 95.6 L638.6 99.8 L639.7 103.0 L633.2 105.9 L631.7 112.5 L628.1 116.8M639.7 103.0 L643.4 106.5 L640.8 112.8 L645.7 118.4 L651.4 117.4 L653.1 119.9 L656.2 116.2 L662.2 114.7 L666.1 115.9 L669.3 119.9M575.7 68.7 L577.2 74.7 L572.3 78.9 L574.0 83.7 L574.9 90.0 L572.6 93.3 L567.2 100.1 L562.9 100.1 L561.0 104.0 L563.5 107.2 L564.9 111.2 L558.4 111.9M613.3 104.6 L614.7 109.0 L614.1 113.4 L615.8 118.7M624.4 101.4 L624.9 109.4 L626.1 114.3 L623.8 117.7M640.8 112.8 L647.1 124.1 L648.5 123.5 L650.8 126.3 L649.9 132.3 L652.8 132.3 L660.7 134.9 L661.9 141.7 L655.6 141.7 L653.6 147.9M650.8 126.3 L658.2 126.9 L659.0 129.9 L663.3 132.6 L665.9 135.8 L668.4 140.8 L668.4 147.6 L661.3 150.5 L659.6 153.1M646.0 135.2 L642.8 140.8 L644.8 148.7 L643.4 153.6M647.1 164.3 L650.2 166.6 L653.1 165.1M618.7 99.2 L624.4 103.7M593.4 92.7 L604.7 96.9M674.4 176.8 L679.8 179.4 L688.9 178.5 L691.7 171.4 L697.7 170.8M763.7 190.2 L763.7 209.1M729.5 225.4 L729.5 277.9M755.1 231.0 L755.1 259.4 L729.5 259.4M763.7 259.4 L763.7 299.8M755.1 259.4 L763.7 259.4 L763.7 269.0 L789.2 267.4 L799.2 266.4" fill="none" stroke="#8c8c8c" stroke-width="0.55" stroke-opacity="0.8" stroke-linejoin="round"/>
<path d="M9.7 51.0 L47.2 51.0M21.6 51.0 L21.6 62.2 L37.0 76.5M30.2 22.5 L30.2 35.2 L31.6 37.2 L29.6 42.0 L30.2 51.0M38.6 51.0 L38.6 69.4M47.1 39.2 L47.1 54.8 L38.6 54.8M47.1 41.2 L38.7 41.2 L33.0 26.8 L33.0 22.5M33.0 39.2 L67.1 39.2M67.0 22.5 L67.0 54.8M47.1 54.8 L72.8 54.8M38.7 69.4 L93.9 69.4M52.8 54.8 L52.8 89.0M70.0 69.4 L70.0 86.7 L59.7 86.7M72.7 54.8 L72.7 71.2 L70.0 71.2M72.8 71.2 L78.5 71.2 L78.5 78.2 L87.0 80.6 L94.1 81.3M67.1 35.6 L88.2 35.6M67.1 47.1 L88.5 47.1M72.8 58.5 L91.9 58.5M86.5 22.5 L88.2 35.6 L88.5 45.2 L103.5 45.2M103.5 45.2 L105.2 49.1 L102.9 57.0 L106.4 62.9 L109.2 69.4 L107.8 73.0 L106.6 76.5 L103.5 83.3 L102.4 90.0 L107.8 90.0 L108.1 92.7M90.4 56.3 L102.9 56.3M93.9 71.2 L106.6 71.2M95.6 83.3 L103.5 83.3M95.6 83.3 L95.6 94.3M93.9 71.2 L94.1 81.3M93.9 58.5 L93.9 69.4M114.0 52.1 L114.0 65.8M121.7 52.1 L121.7 61.8M109.5 69.4 L112.6 67.6 L118.3 66.2 L121.7 61.8 L128.0 64.4 L133.7 56.3M108.4 70.8 L130.5 70.8 L147.0 71.2M106.1 76.5 L126.5 76.5M112.0 76.5 L111.5 92.0M120.9 76.5 L121.1 90.0 L113.8 90.0 L114.0 92.3M121.1 90.0 L121.4 91.0 L131.1 91.0M126.5 76.5 L132.8 76.1 L139.6 80.3M133.9 51.0 L148.7 51.0M133.9 59.6 L147.3 59.6M133.9 51.0 L133.9 59.6 L128.0 64.4M124.8 70.8 L130.5 67.6 L134.5 68.4 L141.6 61.1M154.4 39.2 L153.8 54.8M159.5 39.2 L156.7 48.3M160.7 38.0 L161.8 46.7M114.0 52.1 L125.4 52.1M105.2 49.1 L113.2 49.1M99.0 32.7 L100.4 40.8 L103.5 45.2M105.8 32.7 L112.6 36.4 L113.8 38.8M153.8 54.8 L158.7 51.0 L159.5 53.7M50.1 22.5 L50.1 -31.7M72.8 22.5 L72.8 -31.7M21.6 0.6 L38.4 22.5M92.1 22.5 L109.8 -14.3M136.8 11.4 L136.8 33.1 L151.0 38.0M170.0 30.6 L174.3 26.8 L179.4 35.2" fill="none" stroke="#a0a0a0" stroke-width="0.5" stroke-opacity="0.7" stroke-dasharray="1.5 1"/>
<path d="M128.3 -5.2 L129.1 4.5 L131.1 7.7 L133.9 12.3 L137.4 11.4 L138.8 6.8 L138.2 -2.8ZM101.0 32.3 L105.5 32.7 L114.0 33.1 L122.0 33.1 L122.3 29.8 L119.7 27.3 L116.9 23.8 L111.8 23.8 L108.4 26.8 L104.1 29.8ZM113.2 52.1 L114.0 47.1 L113.2 41.2 L115.5 37.2 L119.7 35.2 L121.7 36.0 L119.7 39.2 L117.2 42.0 L117.7 49.1 L116.0 52.1ZM122.0 36.0 L126.0 37.2 L128.3 46.4 L130.2 46.0 L130.5 39.2 L133.9 40.4 L134.8 35.6 L129.7 34.8ZM125.4 52.1 L131.1 52.9 L137.6 49.1 L138.2 47.5 L133.9 48.7 L128.3 51.0ZM135.9 46.4 L142.5 46.0 L146.2 45.2 L145.9 42.4 L142.5 43.2 L137.4 44.4ZM81.3 15.9 L88.5 15.9 L85.6 2.1 L79.9 2.1ZM442.4 52.5 L445.0 54.0 L445.5 54.0 L449.5 54.4 L452.6 54.0 L457.5 51.0 L462.3 50.6 L466.6 53.7 L471.7 55.2 L477.1 54.8 L480.8 52.9 L481.4 49.8 L479.1 46.4 L475.1 44.8 L471.4 41.6 L468.6 39.6 L466.9 38.0 L463.7 38.0 L462.3 40.0 L458.9 41.6 L457.8 40.8 L455.5 37.6 L456.3 35.6 L453.2 33.9 L450.1 33.1 L447.0 37.6 L444.4 41.2 L444.1 45.6 L442.1 48.3ZM462.3 36.4 L466.9 37.6 L469.4 32.7 L474.2 30.2 L471.7 31.0 L463.7 33.1ZM438.7 56.3 L441.0 54.8 L445.2 54.8 L445.8 56.7 L441.8 57.4ZM495.6 40.8 L497.8 47.1 L499.3 51.0 L501.5 53.7 L503.8 57.4 L502.7 62.2 L501.8 65.8 L503.0 67.6 L505.8 69.1 L509.5 70.1 L513.5 69.8 L516.3 68.4 L516.0 62.9 L514.0 60.7 L515.8 56.3 L512.9 54.0 L512.3 49.1 L508.6 46.4 L507.2 41.6 L508.6 38.4 L513.8 38.0 L513.8 32.3 L508.4 31.0 L503.0 33.1 L501.0 36.0 L498.1 36.8ZM528.3 33.1 L532.0 35.2 L536.2 39.2 L533.4 43.2 L529.1 41.2ZM657.6 10.5 L659.9 11.0 L665.6 6.3 L671.3 0.6 L674.1 -7.7 L670.7 -5.2 L664.2 4.5 L659.9 7.7ZM571.8 32.3 L576.0 33.1 L587.4 33.1 L587.4 34.8 L578.9 35.6 L573.2 34.8ZM453.2 185.6 L456.1 181.9 L459.7 182.2 L460.9 185.6 L459.2 189.6 L455.2 190.5 L452.9 188.5ZM445.8 192.2 L447.5 195.6 L449.5 200.7 L451.2 206.5 L449.8 207.3 L447.2 202.8 L445.5 197.0ZM460.3 210.2 L461.7 215.7 L462.3 222.1 L460.9 223.9 L460.0 218.6 L459.2 212.8Z" fill="url(#wvsrc)" stroke="#c6cfdb" stroke-width="0.6"/>
</g></svg>
<svg style="left:769px;top:915px" width="791" height="371" viewBox="0 0 791 371">
<defs><pattern id="wvdst" width="8" height="8" patternUnits="userSpaceOnUse" x="0.95" y="1">
<rect width="8" height="8" fill="#e5e5e5"/>
<path d="M-1.2 4.6 A4 3.1 0 0 0 6.8 4.6 A4 3.1 0 0 0 14.8 4.6" fill="none" stroke="#dcdcdc" stroke-width="1.3"/>
</pattern><clipPath id="cldst"><rect width="791" height="371"/></clipPath></defs>
<g clip-path="url(#cldst)">
<rect width="791" height="371" fill="url(#wvdst)"/>
<path d="M-30.7 -69.4 L-2.2 -31.7 L12.0 -20.7 L21.9 -5.2 L25.6 -0.3 L27.6 5.4 L31.9 12.8 L30.8 15.0 L37.6 20.4 L41.0 24.7 L41.3 29.0 L43.3 33.9 L43.3 43.2 L41.8 48.3 L42.7 54.8 L43.8 59.3 L46.1 65.8 L47.5 67.6 L49.2 70.8 L51.8 74.7 L52.9 78.2 L57.5 79.6 L59.5 80.9 L62.6 84.3 L64.3 88.4 L66.6 92.3 L70.3 98.2 L71.1 100.8 L74.5 104.6 L77.1 110.3 L78.8 111.9 L82.5 115.6 L84.5 115.0 L82.2 111.9 L80.2 106.8 L76.0 98.2 L71.4 92.3 L69.4 87.7 L74.5 89.0 L78.0 95.0 L80.8 100.5 L84.5 104.6 L87.9 109.4 L93.0 114.7 L95.9 120.2 L96.4 123.8 L98.7 126.9 L102.1 129.9 L107.2 132.3 L114.3 134.9 L121.5 137.6 L127.1 136.1 L131.4 138.2 L135.7 142.6 L141.4 144.1 L146.5 144.9 L149.9 147.9 L151.9 151.3 L152.2 154.2 L155.6 155.4 L158.4 158.5 L162.7 159.4 L166.9 161.7 L168.9 159.1 L171.2 157.4 L173.2 159.4 L174.6 162.0 L175.5 164.9 L176.0 171.4 L174.0 175.7 L171.2 179.1 L168.4 181.4 L167.2 185.6 L167.8 192.2 L164.9 195.6 L165.5 199.9 L168.9 202.8 L172.1 208.5 L175.5 215.7 L179.2 222.4 L184.0 228.0 L191.1 231.9 L195.4 236.3 L196.2 243.9 L195.4 253.1 L194.5 262.6 L192.5 272.3 L192.2 282.3 L190.3 290.9 L187.4 298.0 L186.6 307.1 L186.0 314.6 L186.8 322.4 L184.0 332.5 L181.7 340.9 L182.6 351.9 L185.4 361.1 L191.1 365.9 L196.8 370.8 L203.9 373.3 L208.2 370.8 L209.6 368.4 L201.1 359.3 L199.1 354.2 L199.6 349.7 L201.9 347.4 L203.3 343.1 L206.7 338.8 L208.7 335.8 L204.5 330.4 L203.9 328.4 L208.2 325.6 L211.0 324.4 L210.4 318.5 L213.0 316.5 L214.7 315.0 L211.0 310.8 L216.7 311.6 L219.0 308.9 L218.7 303.4 L225.2 302.7 L231.8 300.5 L234.3 296.2 L233.2 291.9 L230.1 288.1 L233.7 287.4 L239.4 288.8 L242.8 286.7 L246.5 282.3 L250.2 278.2 L252.8 273.9 L257.1 267.4 L257.9 261.0 L258.8 257.8 L263.6 253.1 L268.4 250.9 L272.1 250.0 L276.4 249.7 L279.2 246.9 L280.9 242.7 L282.9 238.4 L284.4 233.3 L285.2 227.4 L284.9 223.0 L286.3 219.5 L289.2 215.7 L292.0 212.0 L295.4 208.5 L296.6 204.2 L295.7 199.3 L292.0 197.0 L286.3 193.3 L280.7 190.8 L272.1 189.6 L269.3 189.9 L263.6 185.6 L257.9 186.8 L255.1 183.4 L252.2 181.4 L250.0 172.8 L246.5 168.6 L242.3 166.3 L236.6 166.3 L233.2 165.4 L229.5 163.1 L225.2 158.8 L222.4 158.3 L221.0 154.5 L218.1 152.5 L213.0 153.1 L208.2 152.5 L203.9 152.8 L201.1 151.9 L196.8 147.9 L196.2 150.2 L193.1 149.0 L192.0 152.8 L191.1 150.5 L188.8 149.6 L184.6 151.0 L181.2 153.1 L179.7 156.2 L176.9 158.0 L175.8 158.3 L174.0 156.2 L169.8 155.4 L166.1 157.4 L162.7 156.8 L159.0 153.4 L157.8 149.9 L158.4 145.5 L159.3 139.7 L156.4 137.3 L151.3 137.0 L145.6 137.6 L145.0 132.3 L146.2 129.6 L147.3 126.0 L148.5 120.2 L145.6 120.2 L139.1 121.4 L138.5 124.7 L135.9 128.4 L128.6 129.9 L124.3 129.0 L121.5 126.0 L119.5 121.7 L117.8 117.1 L118.3 110.9 L119.2 106.2 L119.2 100.8 L124.3 97.6 L128.6 94.6 L132.8 94.6 L138.5 95.9 L142.2 95.6 L141.4 92.7 L145.6 91.7 L149.9 92.0 L154.1 94.6 L157.0 93.3 L159.8 96.6 L160.7 100.8 L162.7 104.6 L164.9 108.4 L166.9 108.7 L168.1 104.6 L166.9 98.2 L164.9 93.3 L164.4 90.0 L166.1 86.0 L170.6 82.6 L174.0 80.3 L178.0 77.5 L181.2 75.4 L180.3 69.8 L181.2 65.8 L182.6 62.9 L185.4 56.7 L186.8 56.3 L191.1 54.8 L193.9 53.3 L196.8 52.5 L196.8 51.0 L194.5 48.7 L195.9 44.4 L199.6 43.2 L203.9 41.2 L205.3 39.2 L208.2 42.4 L209.6 45.2 L213.3 42.0 L216.7 40.4 L221.8 38.0 L225.2 36.0 L223.8 31.0 L221.0 35.2 L218.1 36.4 L213.8 35.2 L211.6 31.0 L212.4 26.8 L213.0 23.0 L206.7 21.7 L199.6 26.0 L202.5 21.2 L208.2 17.3 L218.1 16.8 L228.1 15.5 L233.7 11.9 L235.2 6.8 L236.6 2.1 L230.9 -2.8 L222.4 -10.2 L213.8 -20.7 L196.8 -31.7 L111.5 -69.4ZM410.0 -147.5 L410.0 2.6 L409.2 4.9 L408.0 8.2 L406.0 11.4 L402.9 13.2 L400.3 14.1 L400.3 17.3 L396.4 19.5 L392.7 20.8 L391.3 19.5 L390.4 23.8 L387.3 23.4 L382.4 24.7 L383.6 27.7 L388.7 30.2 L390.4 33.1 L392.4 36.4 L392.4 40.8 L391.5 45.6 L385.0 45.6 L379.3 44.8 L373.1 44.4 L369.6 46.4 L370.5 51.0 L371.1 55.9 L369.1 60.7 L368.8 63.3 L370.8 64.8 L370.8 69.4 L374.8 68.7 L377.9 70.1 L378.7 72.6 L380.4 72.6 L383.3 70.5 L389.8 70.5 L392.4 67.3 L394.4 64.8 L396.4 62.9 L394.9 60.4 L398.4 54.8 L402.1 53.3 L404.9 51.0 L404.6 46.7 L408.6 45.6 L414.6 46.7 L417.1 44.0 L420.8 41.6 L424.5 43.2 L425.7 47.5 L427.6 49.5 L430.8 52.1 L435.0 54.0 L437.6 56.3 L440.4 58.5 L440.2 62.6 L440.7 65.8 L443.0 64.4 L444.4 62.2 L442.7 59.6 L444.1 57.0 L448.1 59.3 L448.4 57.4 L445.6 55.2 L441.3 52.9 L439.0 51.0 L435.6 47.9 L431.1 42.4 L430.8 38.0 L434.5 36.0 L435.0 39.6 L438.4 41.2 L440.7 44.8 L445.6 47.1 L448.7 49.5 L451.0 51.8 L450.7 56.3 L452.7 60.0 L454.7 62.9 L456.1 66.9 L457.5 70.1 L459.8 71.6 L461.8 71.2 L460.6 67.6 L462.6 65.8 L464.0 65.1 L461.2 62.2 L460.1 57.4 L463.2 58.5 L465.5 55.2 L469.7 55.5 L470.6 58.2 L470.3 60.4 L472.3 62.2 L472.3 64.8 L473.4 68.0 L475.4 70.5 L479.7 72.3 L482.8 70.1 L486.8 72.3 L491.6 72.3 L494.5 70.1 L498.4 70.8 L497.6 74.4 L497.6 76.5 L496.7 79.2 L495.3 83.3 L494.2 86.7 L493.3 89.0 L487.6 89.4 L488.5 93.7 L490.5 98.2 L493.2 100.7 L493.9 99.2 L495.0 95.0 L495.3 99.5 L496.7 101.4 L499.6 106.2 L501.6 110.0 L505.3 114.0 L507.0 120.2 L510.1 124.7 L512.4 128.7 L515.8 133.7 L517.5 138.2 L518.0 141.1 L518.9 145.5 L519.5 146.4 L522.3 146.1 L525.2 145.5 L529.4 143.8 L534.3 142.6 L538.0 140.0 L542.2 138.8 L544.2 137.3 L547.9 134.9 L553.0 132.9 L556.4 130.8 L558.7 128.1 L560.1 125.7 L562.1 123.5 L565.8 117.4 L562.7 113.7 L559.3 112.8 L556.4 110.9 L555.9 107.8 L556.1 105.3 L555.3 105.9 L553.6 107.8 L551.0 111.2 L547.9 112.2 L544.8 111.9 L542.5 111.5 L541.6 109.4 L542.2 105.9 L541.1 106.2 L539.9 108.7 L538.5 107.5 L538.2 104.6 L536.5 102.7 L534.3 100.1 L533.1 98.2 L532.0 95.3 L532.8 93.3 L534.5 92.7 L536.5 93.3 L538.5 93.7 L540.2 96.9 L541.6 99.8 L545.1 101.4 L548.5 104.0 L551.6 104.6 L554.2 103.3 L555.9 102.4 L557.9 103.7 L558.7 106.8 L562.1 107.5 L565.2 108.1 L570.9 108.7 L573.5 108.7 L577.8 108.4 L582.0 108.4 L585.1 107.8 L586.8 110.0 L587.7 112.8 L589.7 113.7 L590.5 114.0 L593.4 116.2 L592.5 117.4 L594.8 121.1 L597.4 122.3 L601.1 121.4 L601.9 118.0 L603.1 120.2 L602.8 123.8 L603.1 127.5 L603.6 131.7 L604.2 135.2 L605.6 138.8 L606.8 141.4 L607.9 144.9 L609.0 148.1 L611.0 150.5 L612.4 154.2 L613.6 157.4 L616.1 159.7 L618.1 157.7 L620.7 156.2 L622.1 153.1 L623.0 150.5 L623.8 145.5 L623.8 139.7 L626.1 137.0 L629.5 134.9 L632.6 132.3 L635.2 129.6 L638.0 126.3 L641.7 124.1 L643.1 121.7 L646.0 119.6 L648.8 119.3 L652.2 118.7 L655.1 117.1 L656.8 118.0 L657.9 121.1 L658.2 122.6 L660.5 125.1 L662.5 126.9 L664.2 130.2 L664.5 135.8 L665.3 137.0 L667.0 137.3 L669.6 135.2 L672.1 134.0 L673.3 135.8 L673.6 139.1 L674.7 143.2 L676.1 147.9 L676.1 152.5 L675.6 157.1 L675.3 160.0 L677.3 161.4 L680.1 164.0 L681.2 167.1 L682.1 171.4 L683.8 174.8 L687.2 177.4 L690.1 179.1 L692.3 178.8 L690.9 175.7 L689.8 171.7 L689.8 168.6 L686.6 165.1 L683.8 163.1 L681.2 162.0 L680.1 159.1 L678.1 156.2 L677.8 153.1 L679.0 149.0 L680.1 146.4 L680.4 144.4 L682.7 144.6 L682.9 146.4 L686.6 147.9 L688.3 149.6 L690.1 152.5 L692.9 153.1 L694.3 158.0 L698.0 155.4 L699.4 153.1 L702.6 151.0 L706.0 149.6 L706.5 146.1 L706.3 142.6 L704.8 139.1 L701.7 135.5 L699.1 132.6 L696.9 129.3 L696.3 127.5 L698.6 124.4 L701.1 121.4 L704.3 119.9 L708.0 120.2 L709.1 124.1 L710.2 121.1 L712.2 120.2 L715.6 119.3 L718.5 118.0 L720.5 117.7 L724.2 116.5 L727.0 115.9 L729.9 113.7 L732.7 110.9 L735.5 108.4 L735.8 105.6 L737.8 103.3 L739.8 99.8 L741.5 96.9 L742.6 93.7 L742.4 90.4 L740.9 87.7 L739.5 84.7 L737.8 79.2 L735.5 78.2 L734.7 76.5 L736.4 74.4 L739.0 72.6 L741.2 70.1 L744.1 68.7 L741.5 67.6 L739.2 66.6 L736.4 68.4 L733.8 68.0 L733.5 65.8 L730.7 62.6 L730.4 61.5 L732.7 61.5 L735.5 59.3 L738.4 57.4 L741.2 55.2 L743.2 56.7 L741.2 60.0 L740.4 62.9 L741.8 62.2 L743.5 60.7 L746.3 59.3 L749.2 58.9 L750.6 60.0 L751.7 63.3 L751.2 66.9 L754.3 66.9 L755.4 69.4 L754.9 73.0 L755.7 76.5 L755.2 78.5 L758.3 77.8 L761.1 76.8 L763.4 75.4 L764.0 72.3 L763.7 68.7 L761.7 64.8 L758.9 61.5 L758.6 59.3 L761.4 57.8 L764.5 55.2 L764.8 52.9 L767.1 49.5 L768.8 47.9 L771.9 46.0 L774.5 48.3 L779.0 46.0 L781.9 41.6 L785.9 37.2 L789.0 32.7 L791.5 27.7 L794.7 23.4 L795.5 16.8 L797.8 7.7 L796.7 2.1 L808.0 -31.7 L808.0 -147.5ZM379.0 73.7 L376.5 79.9 L371.6 82.3 L369.4 85.0 L367.9 89.0 L368.2 91.7 L366.5 95.6 L363.1 98.9 L359.1 100.5 L356.3 104.6 L353.7 110.9 L350.9 114.0 L348.9 117.7 L347.2 121.7 L348.9 125.4 L349.5 127.8 L348.9 135.8 L346.9 140.5 L348.0 143.8 L348.3 147.0 L351.7 149.9 L353.2 151.9 L355.4 154.2 L358.0 156.2 L360.5 161.4 L363.7 163.4 L366.8 165.1 L371.6 169.4 L374.5 170.3 L380.2 168.3 L384.4 168.0 L388.7 169.1 L393.0 167.7 L398.6 166.0 L403.5 164.9 L407.2 164.6 L411.7 168.0 L413.7 170.6 L416.3 170.3 L419.4 169.7 L421.4 171.4 L423.7 174.8 L422.8 178.5 L422.5 181.4 L422.2 186.8 L426.5 191.6 L429.3 194.8 L432.8 201.3 L433.3 207.1 L434.2 211.4 L435.0 214.3 L434.5 217.7 L431.1 222.1 L429.1 231.0 L429.3 234.8 L431.3 237.8 L433.9 243.6 L436.5 248.8 L437.9 259.4 L439.3 264.2 L442.7 267.7 L444.7 272.3 L447.0 277.2 L447.8 280.9 L448.1 285.7 L451.0 287.8 L452.9 288.4 L456.9 287.1 L460.1 285.7 L464.9 286.0 L468.6 285.3 L471.4 284.7 L475.4 281.9 L478.5 278.9 L482.5 274.9 L484.8 270.6 L487.6 267.7 L489.3 259.1 L491.0 257.5 L496.2 254.1 L496.7 250.0 L496.4 246.9 L494.5 239.6 L497.9 237.2 L502.1 233.3 L509.8 228.9 L511.2 225.9 L510.9 220.1 L510.1 212.2 L507.5 205.6 L507.2 202.8 L506.1 200.5 L508.7 195.0 L510.1 190.5 L513.2 188.5 L515.2 186.2 L519.5 181.4 L522.9 178.0 L527.1 174.8 L530.6 171.1 L532.8 167.7 L535.4 161.4 L539.7 154.8 L541.1 152.5 L541.6 149.0 L535.4 150.2 L531.7 151.0 L527.7 152.2 L520.9 152.8 L518.9 149.9 L517.5 149.6 L518.6 147.3 L516.3 144.9 L514.1 142.9 L511.8 140.5 L508.7 138.2 L505.3 130.8 L501.8 123.2 L501.3 120.8 L497.9 114.0 L496.7 112.5 L495.0 107.8 L493.0 103.7 L490.2 99.2 L488.5 93.7 L487.6 89.4 L483.4 88.4 L480.2 90.0 L472.8 88.7 L467.4 88.0 L461.8 85.7 L454.9 84.7 L452.7 88.0 L449.8 92.3 L447.3 90.7 L442.1 89.4 L439.3 86.0 L434.2 84.0 L429.9 83.7 L427.4 82.3 L425.4 79.9 L426.5 76.5 L427.1 70.8 L425.1 68.7 L420.2 69.8 L417.1 69.4 L410.6 70.5 L400.1 70.8 L392.4 75.1 L389.5 76.1 L381.9 75.4 L380.7 73.3ZM536.0 217.0 L538.5 223.0 L539.4 226.8 L536.5 233.3 L535.7 236.6 L533.7 242.4 L532.0 248.5 L529.7 255.6 L525.4 257.8 L521.7 256.6 L520.0 252.5 L519.2 247.6 L521.7 239.6 L520.9 233.3 L522.0 229.5 L527.4 227.4 L532.0 221.8ZM379.9 18.2 L383.0 16.8 L385.8 17.1 L389.5 15.5 L393.0 15.0 L396.7 14.8 L398.6 13.7 L399.8 12.3 L397.5 11.4 L396.4 10.3 L395.8 8.2 L395.8 -2.8 L386.4 -2.8 L386.1 3.0 L384.1 6.3 L383.6 8.7 L385.0 11.0 L387.0 11.9 L384.7 12.8 L382.7 13.7 L379.9 18.2ZM378.7 8.2 L378.7 4.5 L378.2 2.1 L378.7 -0.3 L380.2 -2.8 L378.7 -6.2 L374.8 -6.7 L371.6 -3.7 L367.4 -1.3 L367.7 2.1 L369.6 4.0 L367.9 6.3 L366.2 8.7 L366.8 11.0 L368.8 11.4 L372.2 10.5 L375.9 8.7ZM718.2 250.0 L718.5 246.9 L721.6 246.3 L724.2 244.5 L727.6 242.7 L733.5 241.8 L737.0 240.5 L741.2 237.8 L743.8 232.2 L747.2 232.7 L748.3 229.8 L750.9 227.1 L752.6 224.5 L755.4 223.0 L759.1 224.2 L760.3 225.9 L764.3 225.6 L765.4 221.5 L767.9 218.0 L772.8 217.2 L772.8 215.7 L778.2 217.2 L784.2 217.2 L784.7 218.6 L782.2 221.0 L781.0 224.8 L785.3 228.6 L792.4 233.0 L796.1 233.0 L798.4 219.5 L800.9 213.4 L806.6 223.9 L809.5 230.4 L811.7 237.5 L818.8 241.8 L825.7 252.5 L830.8 256.9 L830.8 275.6 L825.7 285.3 L822.0 298.0 L811.7 303.4 L803.8 302.7 L793.8 298.0 L789.6 291.2 L787.8 284.0 L782.2 288.4 L777.3 281.3 L768.2 277.2 L756.9 279.9 L748.3 283.3 L742.6 285.7 L732.7 288.4 L725.6 288.8 L722.7 286.7 L724.7 280.6 L722.7 272.3 L720.5 263.5 L718.5 259.4 L719.3 254.7ZM154.4 119.0 L156.1 116.5 L161.3 115.3 L166.9 115.3 L174.0 117.7 L176.9 121.1 L180.9 121.7 L184.8 123.8 L184.0 125.1 L176.9 125.1 L174.9 122.6 L172.6 120.2 L166.9 119.3 L162.7 118.0 L158.4 119.0ZM187.1 125.4 L189.1 125.1 L192.0 125.1 L196.8 125.7 L199.6 127.2 L201.3 129.0 L200.2 130.2 L196.5 130.2 L193.4 132.0 L190.8 130.5 L186.8 130.5 L184.3 129.6 L188.8 129.0 L189.1 126.6 L187.1 126.0ZM173.2 129.6 L177.2 129.6 L179.2 131.1 L176.3 131.7 L173.2 130.2ZM204.8 129.3 L209.3 129.6 L209.0 130.8 L204.8 131.1ZM227.2 28.5 L229.5 24.7 L233.7 15.9 L238.0 11.0 L237.2 18.2 L243.7 20.8 L245.7 26.8 L245.4 32.3 L242.3 29.4 L238.0 31.5 L235.2 28.5ZM221.5 352.8 L226.6 353.3 L231.5 354.6 L229.5 357.4 L223.8 357.4 L221.8 355.1ZM173.5 108.7 L174.9 111.9 L175.5 107.8 L174.3 104.3 L176.3 104.6ZM219.8 151.9 L222.7 151.9 L222.4 153.9 L219.8 153.9ZM17.7 -0.3 L21.9 -0.3 L21.9 8.2 L19.7 6.8ZM419.7 62.2 L423.4 61.5 L423.7 54.8 L422.0 53.7 L419.1 55.2 L420.0 58.5ZM422.0 53.3 L422.8 50.2 L422.5 47.1 L420.5 48.7 L420.2 51.4ZM431.1 65.5 L433.9 65.1 L440.2 64.8 L438.7 68.7 L438.7 70.5 L436.5 69.4 L431.3 67.3ZM462.6 75.4 L464.9 75.1 L470.6 75.8 L469.1 76.5 L464.0 76.8ZM487.6 77.5 L489.6 77.8 L492.5 76.5 L494.2 74.0 L490.8 75.4 L487.9 76.1ZM622.8 165.1 L623.2 156.0 L624.4 154.8 L626.7 158.5 L628.4 162.0 L627.5 164.6 L624.9 166.0ZM666.7 167.1 L673.0 168.0 L676.1 172.0 L680.7 176.3 L683.5 178.3 L686.6 180.2 L689.8 182.8 L690.9 186.2 L693.2 189.6 L696.0 191.9 L697.2 194.5 L696.6 199.3 L693.2 199.6 L690.1 196.7 L686.6 194.2 L683.2 190.2 L681.0 185.6 L678.4 182.5 L676.4 178.0 L673.6 175.7 L670.1 172.3 L667.3 169.4ZM694.9 202.2 L697.2 199.9 L701.4 200.5 L704.5 202.2 L710.0 202.5 L713.4 202.2 L716.2 202.5 L721.0 204.5 L721.3 207.6 L717.1 206.8 L712.8 206.5 L708.5 205.9 L704.3 205.0 L698.6 203.9 L695.7 202.5ZM721.0 205.9 L724.7 206.8 L723.3 207.9ZM725.6 206.5 L734.1 206.2 L734.1 207.9 L725.6 208.2ZM736.4 207.1 L745.5 206.5 L744.9 207.9 L736.7 207.9ZM746.9 212.0 L751.7 207.3 L757.7 206.8 L751.2 210.8 L748.3 212.5ZM705.4 178.3 L707.4 176.8 L710.0 178.0 L712.8 175.7 L717.1 173.7 L719.9 170.0 L723.6 168.0 L725.9 165.7 L728.4 163.1 L730.4 164.6 L733.3 168.6 L734.7 167.7 L731.8 170.3 L730.4 173.1 L731.3 176.3 L733.8 180.0 L731.0 180.5 L729.9 183.7 L727.3 187.1 L726.7 189.6 L726.2 192.8 L722.2 194.2 L718.5 192.2 L714.2 192.5 L711.4 191.3 L709.1 191.0 L708.5 187.6 L706.5 183.9 L705.4 181.7ZM735.3 198.5 L735.5 192.8 L733.5 190.8 L736.4 182.2 L737.8 180.2 L750.9 178.5 L745.5 181.1 L738.4 181.4 L740.7 185.6 L746.3 185.4 L742.4 188.5 L744.1 196.2 L739.8 191.3 L738.1 198.7ZM768.2 186.8 L776.8 185.1 L786.7 187.1 L796.7 190.2 L810.0 195.0 L815.1 199.9 L810.9 205.6 L822.2 212.8 L813.7 211.4 L803.8 208.5 L800.9 209.4 L796.7 209.1 L791.0 205.6 L788.1 206.5 L786.7 201.3 L778.2 194.2 L772.5 194.2 L771.1 190.8 L775.1 189.1 L768.8 188.5ZM758.3 177.7 L761.4 178.5 L760.3 182.2 L758.6 184.5 L762.0 183.4ZM754.0 191.6 L757.4 192.2 L756.9 193.9 L754.0 193.3ZM761.1 191.0 L767.1 191.3 L767.1 193.0 L761.1 192.8ZM738.7 129.3 L740.7 129.0 L743.2 129.3 L743.2 133.4 L741.5 136.7 L741.5 140.2 L743.2 142.3 L745.5 142.9 L748.6 145.5 L747.5 146.7 L745.2 145.2 L742.1 142.9 L738.7 141.7 L739.0 140.2 L737.0 138.8 L736.4 135.8 L737.8 136.4 L738.1 132.0ZM742.6 163.1 L743.2 161.1 L746.9 160.6 L748.0 159.4 L752.0 155.1 L752.9 156.5 L755.7 161.4 L754.6 164.9 L752.6 166.9 L748.6 164.9 L747.5 162.3 L744.9 161.7ZM749.2 147.0 L753.2 148.4 L751.2 153.9 L749.2 151.9ZM742.4 149.0 L746.1 152.2 L746.9 156.5 L744.1 154.5 L742.6 151.9ZM746.6 150.8 L748.6 153.4 L747.5 155.4ZM729.0 159.1 L735.8 151.6 L735.5 149.9 L728.4 158.3ZM737.2 115.6 L739.0 118.7 L741.5 113.1 L742.4 109.4 L741.2 108.4 L739.0 110.6 L737.5 113.4ZM704.5 126.9 L709.7 124.4 L711.4 126.0 L710.0 128.7 L707.1 130.2 L704.8 129.3ZM764.3 82.3 L768.2 80.3 L770.8 82.6 L770.8 85.0 L769.1 88.7 L767.1 90.0 L766.0 88.7 L766.2 85.7 L764.8 84.3ZM772.5 83.3 L773.9 84.3 L777.6 82.3 L778.8 79.2 L775.3 78.5 L772.8 80.3ZM767.9 79.9 L772.8 75.1 L775.3 74.7 L782.4 73.3 L784.4 69.4 L785.9 67.6 L786.1 70.1 L789.6 68.0 L793.8 60.0 L795.5 54.0 L798.1 57.0 L799.5 60.4 L796.7 67.6 L796.1 74.0 L793.5 76.5 L790.4 77.5 L784.7 78.9 L781.9 81.6 L780.7 77.5 L773.9 78.5 L769.1 80.3ZM793.8 52.9 L798.1 49.1 L803.2 51.0 L809.5 46.0 L805.2 42.8 L798.7 37.6 L797.8 45.2 L793.8 47.9ZM547.3 146.7 L550.7 146.4 L549.9 147.6 L547.9 147.6Z" fill="#fff" stroke="#c6cfdb" stroke-width="0.8"/>
<path d="M45.3 22.5 L125.1 22.5 L125.1 20.8 L126.9 23.8 L141.1 26.8 L154.7 31.5 L156.7 33.1 L161.5 38.0 L161.3 47.1 L159.5 50.6 L160.7 52.1 L171.2 49.8 L170.6 45.6 L178.6 42.4 L183.4 39.2 L192.5 39.2 L194.8 37.6 L196.8 32.3 L199.1 29.4 L201.9 29.8 L203.0 36.4 L205.0 38.8M62.9 85.0 L69.7 84.3 L80.2 89.0 L88.2 89.0 L88.2 87.4 L93.0 87.4 L98.7 94.6 L103.0 96.6 L107.5 94.0 L112.9 101.4 L118.6 106.5M133.7 141.1 L133.7 138.8 L135.9 136.4 L138.8 136.4 L138.8 131.4 L142.5 131.4 L144.8 129.3M142.2 131.4 L142.2 137.0M141.9 141.4 L145.6 142.9 L147.6 145.5M142.2 139.4 L145.0 141.1 L154.1 140.0 L159.3 139.7M152.2 151.0 L157.8 151.6M160.1 160.0 L161.0 155.7M176.3 160.3 L174.3 162.3M189.7 151.3 L190.3 158.5 L192.5 162.8 L196.8 162.8 L203.9 165.1 L203.0 170.0 L204.5 177.4 L198.2 180.0 L196.2 185.6 L197.1 194.8M171.2 178.8 L176.9 181.7 L181.7 183.1 L186.8 186.2 L195.4 194.2M167.5 192.5 L171.2 197.0 L172.6 192.8 L181.7 183.1M225.2 158.5 L223.2 168.0 L213.8 171.4 L211.6 179.1 L204.5 177.4M233.7 165.7 L230.9 177.7M242.3 166.6 L241.7 176.5M223.2 168.0 L226.6 178.5 L236.6 177.4 L248.8 170.8M197.1 194.8 L187.7 203.6 L189.7 210.8 L195.1 209.9 L197.9 214.3 L210.2 211.4 L211.0 217.2 L221.0 221.5 L224.7 226.2 L230.3 229.8 L232.3 234.8 L230.9 240.9 L231.5 247.2 L237.4 247.9 L240.6 257.8 L242.8 263.2 L236.6 265.8 L232.0 272.9 L244.0 284.7M200.2 214.3 L198.2 227.4 L198.8 233.6 L195.7 235.7M198.8 233.6 L201.3 239.0 L202.5 246.9 L209.0 247.2 L217.8 247.6 L225.2 238.7 L230.9 240.9M202.5 246.9 L201.9 254.7 L201.1 262.6 L197.4 272.3 L196.8 282.3 L195.1 292.6 L193.4 301.6 L191.7 314.6 L192.2 322.4 L192.0 332.5 L188.3 343.1 L189.7 354.2 L201.1 357.9M217.8 247.6 L232.0 257.2 L240.6 257.8M229.8 284.0 L232.0 272.9M390.7 76.5 L392.4 85.7 L385.3 90.7 L371.1 97.6 L371.1 100.8 L358.3 100.8M371.1 102.1 L371.1 106.2 L361.7 106.2 L361.7 114.0 L358.8 120.8 L347.5 120.8M371.1 102.1 L382.2 109.4 L377.3 109.7 L380.2 135.2 L363.1 138.2 L361.1 140.2 L348.6 135.2M382.2 109.4 L399.2 121.7 L408.0 127.2 L412.3 126.6 L429.9 114.0M419.4 69.8 L420.0 83.3 L422.8 92.7 L424.2 109.4 L429.9 114.0M428.5 83.0 L424.8 90.7 L422.8 92.7M466.9 88.4 L466.9 118.7M466.9 118.7 L500.4 118.7M429.9 114.0 L441.3 114.0 L464.0 126.3 L464.0 137.6 L459.8 142.6 L458.3 146.7 L462.6 155.7 L459.8 160.0 L448.4 158.5 L439.9 161.4 L437.0 165.1 L437.0 170.0 L441.9 176.5 L448.4 172.8M439.9 115.6 L439.0 123.2 L434.2 142.6 L435.6 147.0 L438.4 154.2 L435.6 158.5 L432.8 161.4 L429.3 163.1 L424.2 165.7 L420.2 169.1M406.0 149.3 L415.7 145.5 L434.2 143.5M406.0 149.3 L403.5 164.9M396.1 151.3 L400.1 165.1M387.3 168.3 L387.8 151.3M373.1 170.0 L374.5 158.5 L372.2 154.2 L364.0 162.8M380.2 135.2 L380.4 153.4 L387.8 151.3 L398.4 151.3 L403.8 147.3 L406.0 149.3M399.2 121.7 L399.2 140.0 L406.6 138.2 L408.0 127.2M348.0 144.4 L360.8 147.3 L363.7 147.3 L371.9 150.2M353.2 151.9 L361.1 147.3M464.0 126.3 L464.0 137.6M459.8 142.6 L469.7 154.2 L483.4 155.1 L491.0 154.2 L492.5 155.7 L495.3 168.6 L492.5 170.8 L484.5 172.0M500.4 118.7 L502.1 130.8 L499.6 141.7 L503.8 141.4 L516.3 147.0M499.6 141.7 L492.5 155.7M492.5 170.8 L495.3 168.6 L503.8 172.6 L512.4 171.4 L520.9 168.9 L532.3 160.0 L532.0 160.0 L520.9 157.1 L518.9 149.9M512.4 171.4 L512.4 187.6M492.5 170.8 L492.2 185.6 L507.2 196.2M484.5 172.0 L482.5 172.6 L480.0 186.8 L479.1 195.6 L482.5 206.5 L489.6 209.9M480.0 186.8 L492.2 185.6M430.5 197.0 L441.3 199.9 L445.6 205.6 L458.3 214.3 L464.0 215.1 L474.0 217.7 L478.2 221.2 L481.9 207.1M482.5 172.6 L475.4 170.0 L468.3 167.7 L459.8 170.6 L451.2 168.3 L448.4 172.8 L446.4 178.5 L441.3 187.1 L435.6 195.0 L430.5 197.0M437.0 170.0 L427.9 176.5 L423.7 176.3M427.9 176.5 L427.9 194.2 L430.5 197.0M429.3 232.7 L454.9 234.5 L462.0 233.6M458.3 214.3 L458.3 230.4 L454.9 234.5M442.7 267.7 L452.7 267.1 L452.7 255.6 L452.7 246.9 L455.5 234.8 L462.0 233.6M452.7 255.6 L466.9 258.4 L472.6 253.1 L479.4 247.6 L473.4 242.4 L468.3 234.8 L462.0 233.6M486.5 259.1 L485.4 251.6 L488.2 245.4 L489.6 231.9 L482.2 227.7 L496.7 224.5 L510.7 212.8M479.4 247.6 L485.4 247.9M478.2 221.2 L482.2 227.7M489.6 209.9 L495.3 215.7M475.4 268.4 L479.1 271.9 L474.0 274.3 L472.6 271.0M370.2 51.4 L377.3 51.4 L376.2 62.2 L374.5 68.7M390.7 45.6 L404.9 49.5M402.9 13.2 L407.7 18.6 L413.1 20.4 L419.1 22.5 L417.4 28.5 L415.4 29.0 L412.9 34.4 L415.7 35.6 L417.7 42.8M413.1 20.4 L413.4 14.6 L412.9 10.1 L415.7 8.2 L416.3 3.0M405.5 12.3 L412.3 12.8 L412.9 14.6M417.4 28.5 L425.7 29.8 L432.8 29.0 L430.5 23.4 L437.0 24.3 L443.8 24.3 L438.4 13.7M412.9 34.4 L421.4 35.6 L425.7 33.1 L431.3 31.0 L434.7 33.1M437.0 2.1 L438.4 13.7 L448.4 18.6 L459.8 22.5 L463.7 16.4 L462.6 9.1 L462.6 0.2M432.8 29.0 L442.7 27.7M443.8 24.3 L444.7 26.8 L449.2 27.7 L458.9 25.1 L459.8 22.5M442.7 27.7 L443.0 33.1 L449.5 35.6 L456.9 32.7 L460.9 26.8M434.7 33.1 L439.9 35.2 L443.0 33.1M458.9 25.1 L471.4 26.0 L476.0 37.2 L480.0 38.0M456.9 32.7 L460.1 42.4 L466.9 44.4 L477.1 44.4M460.9 26.8 L465.5 27.3 L476.0 37.2M462.6 9.1 L486.8 8.7 L493.9 10.5 L509.5 19.9 L505.3 28.1 L507.2 30.2M471.4 26.0 L481.1 26.0 L480.0 37.6M449.5 35.6 L451.0 39.6 L460.1 42.4M440.7 44.8 L442.7 38.4 L451.0 39.6 L451.0 47.1 L452.7 49.8 L459.5 49.8 L461.2 53.7 L470.6 52.1 L475.4 51.0M451.0 51.8 L454.4 54.4 L461.2 53.7M452.7 60.0 L455.5 56.3M470.6 52.1 L469.7 55.5M462.6 0.2 L469.7 -7.7 L476.0 -10.7M486.8 8.7 L486.2 4.5M498.4 70.8 L516.6 68.7 L523.2 69.1 L521.7 60.4 L519.5 54.4 L513.8 52.9M523.2 69.1 L526.6 76.5 L524.9 79.9 L532.0 88.4 L532.3 93.7M516.6 68.7 L512.4 78.2 L506.7 85.7 L501.0 86.7 L496.7 82.0M506.7 85.7 L501.0 88.4 L503.8 93.3 L500.7 95.3 L495.3 95.3M532.0 95.3 L528.0 96.3 L522.9 95.9 L512.4 87.0 L506.7 85.7M528.0 96.3 L530.8 98.2 L533.7 98.2M518.0 134.6 L525.2 132.9 L530.0 133.7 L543.6 127.8 L554.2 118.7 L552.7 116.5 L542.5 111.5M543.6 127.8 L546.8 134.9M556.1 109.7 L554.4 112.5 L552.7 116.5M521.7 60.4 L532.3 61.1 L532.8 64.4M519.5 54.4 L528.0 54.4 L526.6 48.3 L529.4 43.2M528.0 54.4 L534.0 51.8M549.3 68.4 L556.4 65.5 L569.2 70.8 L569.8 74.7 L568.7 79.9 L568.9 88.7 L571.5 90.4 L568.9 94.0 L573.5 95.3 L576.6 95.0 L584.6 93.7 L585.4 89.4 L592.8 87.0 L596.2 80.3 L592.8 76.8 L598.5 72.6 L602.5 69.4 L608.7 68.7M569.2 70.8 L579.2 68.7 L588.6 68.7 L590.3 65.1 L597.1 64.0 L605.0 60.4M556.4 65.5 L553.3 54.0 L563.0 49.1 L569.2 41.6 L572.1 45.2 L583.7 47.1 L585.4 54.0 L592.0 53.3 L597.9 48.3 L606.2 46.0 L621.0 47.9 L624.1 39.2 L631.8 31.0 L638.9 30.6 L644.3 22.1M538.5 38.0 L544.2 51.8 L553.3 54.0M529.4 43.2 L535.1 33.1M529.4 21.2 L539.9 11.4 L554.2 15.5 L570.1 14.6 L569.5 9.1 L583.4 -4.7 L604.5 2.1 L614.4 -2.8 L623.2 13.7 L644.3 22.1M644.3 22.1 L651.7 16.4 L674.4 9.1 L688.6 16.8 L700.0 18.2 L727.0 19.5 L736.4 18.2 L734.7 22.1 L731.0 28.5 L725.6 33.1 L713.9 39.2 L694.0 52.5 L669.6 48.3 L666.7 42.0 L654.2 38.0 L652.5 27.3 L644.3 22.1M736.4 18.2 L740.9 3.0 L753.7 4.9 L758.3 19.1 L767.1 23.0 L778.8 26.0 L774.2 39.2 L770.8 38.0 L767.1 49.5M749.2 58.9 L759.7 52.9 L764.5 49.5 L767.1 49.5M751.7 66.2 L756.3 66.2 L760.8 63.7M608.7 68.7 L617.0 74.7 L620.1 79.2 L619.5 85.0 L621.2 89.4 L626.4 92.7 L623.5 97.2 L629.8 100.1 L636.6 102.1 L646.3 104.6 L646.6 100.1 L651.1 98.9 L657.4 101.4 L664.5 95.6 L671.6 99.8 L672.7 103.0 L666.2 105.9 L664.7 112.5 L661.1 116.8M672.7 103.0 L676.4 106.5 L673.8 112.8 L678.7 118.4 L684.4 117.4 L686.1 119.9 L689.2 116.2 L695.2 114.7 L699.1 115.9 L702.3 119.9M608.7 68.7 L610.2 74.7 L605.3 78.9 L607.0 83.7 L607.9 90.0 L605.6 93.3 L600.2 100.1 L595.9 100.1 L594.0 104.0 L596.5 107.2 L597.9 111.2 L591.4 111.9M646.3 104.6 L647.7 109.0 L647.1 113.4 L648.8 118.7M657.4 101.4 L657.9 109.4 L659.1 114.3 L656.8 117.7M673.8 112.8 L680.1 124.1 L681.5 123.5 L683.8 126.3 L682.9 132.3 L685.8 132.3 L693.7 134.9 L694.9 141.7 L688.6 141.7 L686.6 147.9M683.8 126.3 L691.2 126.9 L692.0 129.9 L696.3 132.6 L698.9 135.8 L701.4 140.8 L701.4 147.6 L694.3 150.5 L692.6 153.1M679.0 135.2 L675.8 140.8 L677.8 148.7 L676.4 153.6M680.1 164.3 L683.2 166.6 L686.1 165.1M651.7 99.2 L657.4 103.7M626.4 92.7 L637.7 96.9M707.4 176.8 L712.8 179.4 L721.9 178.5 L724.7 171.4 L730.7 170.8M796.7 190.2 L796.7 209.1M762.5 225.4 L762.5 277.9M788.1 231.0 L788.1 259.4 L762.5 259.4M796.7 259.4 L796.7 299.8M788.1 259.4 L796.7 259.4 L796.7 269.0 L822.2 267.4 L832.2 266.4" fill="none" stroke="#8c8c8c" stroke-width="0.55" stroke-opacity="0.8" stroke-linejoin="round"/>
<path d="M42.7 51.0 L80.2 51.0M54.6 51.0 L54.6 62.2 L70.0 76.5M63.2 22.5 L63.2 35.2 L64.6 37.2 L62.6 42.0 L63.2 51.0M71.6 51.0 L71.6 69.4M80.1 39.2 L80.1 54.8 L71.6 54.8M80.1 41.2 L71.7 41.2 L66.0 26.8 L66.0 22.5M66.0 39.2 L100.1 39.2M100.0 22.5 L100.0 54.8M80.1 54.8 L105.8 54.8M71.7 69.4 L126.9 69.4M85.8 54.8 L85.8 89.0M103.0 69.4 L103.0 86.7 L92.7 86.7M105.7 54.8 L105.7 71.2 L103.0 71.2M105.8 71.2 L111.5 71.2 L111.5 78.2 L120.0 80.6 L127.1 81.3M100.1 35.6 L121.2 35.6M100.1 47.1 L121.5 47.1M105.8 58.5 L124.9 58.5M119.5 22.5 L121.2 35.6 L121.5 45.2 L136.5 45.2M136.5 45.2 L138.2 49.1 L135.9 57.0 L139.4 62.9 L142.2 69.4 L140.8 73.0 L139.6 76.5 L136.5 83.3 L135.4 90.0 L140.8 90.0 L141.1 92.7M123.4 56.3 L135.9 56.3M126.9 71.2 L139.6 71.2M128.6 83.3 L136.5 83.3M128.6 83.3 L128.6 94.3M126.9 71.2 L127.1 81.3M126.9 58.5 L126.9 69.4M147.0 52.1 L147.0 65.8M154.7 52.1 L154.7 61.8M142.5 69.4 L145.6 67.6 L151.3 66.2 L154.7 61.8 L161.0 64.4 L166.7 56.3M141.4 70.8 L163.5 70.8 L180.0 71.2M139.1 76.5 L159.5 76.5M145.0 76.5 L144.5 92.0M153.9 76.5 L154.1 90.0 L146.8 90.0 L147.0 92.3M154.1 90.0 L154.4 91.0 L164.1 91.0M159.5 76.5 L165.8 76.1 L172.6 80.3M166.9 51.0 L181.7 51.0M166.9 59.6 L180.3 59.6M166.9 51.0 L166.9 59.6 L161.0 64.4M157.8 70.8 L163.5 67.6 L167.5 68.4 L174.6 61.1M187.4 39.2 L186.8 54.8M192.5 39.2 L189.7 48.3M193.7 38.0 L194.8 46.7M147.0 52.1 L158.4 52.1M138.2 49.1 L146.2 49.1M132.0 32.7 L133.4 40.8 L136.5 45.2M138.8 32.7 L145.6 36.4 L146.8 38.8M186.8 54.8 L191.7 51.0 L192.5 53.7M83.1 22.5 L83.1 -31.7M105.8 22.5 L105.8 -31.7M54.6 0.6 L71.4 22.5M125.1 22.5 L142.8 -14.3M169.8 11.4 L169.8 33.1 L184.0 38.0M203.0 30.6 L207.3 26.8 L212.4 35.2" fill="none" stroke="#a0a0a0" stroke-width="0.5" stroke-opacity="0.7" stroke-dasharray="1.5 1"/>
<path d="M161.3 -5.2 L162.1 4.5 L164.1 7.7 L166.9 12.3 L170.4 11.4 L171.8 6.8 L171.2 -2.8ZM134.0 32.3 L138.5 32.7 L147.0 33.1 L155.0 33.1 L155.3 29.8 L152.7 27.3 L149.9 23.8 L144.8 23.8 L141.4 26.8 L137.1 29.8ZM146.2 52.1 L147.0 47.1 L146.2 41.2 L148.5 37.2 L152.7 35.2 L154.7 36.0 L152.7 39.2 L150.2 42.0 L150.7 49.1 L149.0 52.1ZM155.0 36.0 L159.0 37.2 L161.3 46.4 L163.2 46.0 L163.5 39.2 L166.9 40.4 L167.8 35.6 L162.7 34.8ZM158.4 52.1 L164.1 52.9 L170.6 49.1 L171.2 47.5 L166.9 48.7 L161.3 51.0ZM168.9 46.4 L175.5 46.0 L179.2 45.2 L178.9 42.4 L175.5 43.2 L170.4 44.4ZM114.3 15.9 L121.5 15.9 L118.6 2.1 L112.9 2.1ZM475.4 52.5 L478.0 54.0 L478.5 54.0 L482.5 54.4 L485.6 54.0 L490.5 51.0 L495.3 50.6 L499.6 53.7 L504.7 55.2 L510.1 54.8 L513.8 52.9 L514.4 49.8 L512.1 46.4 L508.1 44.8 L504.4 41.6 L501.6 39.6 L499.9 38.0 L496.7 38.0 L495.3 40.0 L491.9 41.6 L490.8 40.8 L488.5 37.6 L489.3 35.6 L486.2 33.9 L483.1 33.1 L480.0 37.6 L477.4 41.2 L477.1 45.6 L475.1 48.3ZM495.3 36.4 L499.9 37.6 L502.4 32.7 L507.2 30.2 L504.7 31.0 L496.7 33.1ZM471.7 56.3 L474.0 54.8 L478.2 54.8 L478.8 56.7 L474.8 57.4ZM528.6 40.8 L530.8 47.1 L532.3 51.0 L534.5 53.7 L536.8 57.4 L535.7 62.2 L534.8 65.8 L536.0 67.6 L538.8 69.1 L542.5 70.1 L546.5 69.8 L549.3 68.4 L549.0 62.9 L547.0 60.7 L548.8 56.3 L545.9 54.0 L545.3 49.1 L541.6 46.4 L540.2 41.6 L541.6 38.4 L546.8 38.0 L546.8 32.3 L541.4 31.0 L536.0 33.1 L534.0 36.0 L531.1 36.8ZM561.3 33.1 L565.0 35.2 L569.2 39.2 L566.4 43.2 L562.1 41.2ZM690.6 10.5 L692.9 11.0 L698.6 6.3 L704.3 0.6 L707.1 -7.7 L703.7 -5.2 L697.2 4.5 L692.9 7.7ZM604.8 32.3 L609.0 33.1 L620.4 33.1 L620.4 34.8 L611.9 35.6 L606.2 34.8ZM486.2 185.6 L489.1 181.9 L492.7 182.2 L493.9 185.6 L492.2 189.6 L488.2 190.5 L485.9 188.5ZM478.8 192.2 L480.5 195.6 L482.5 200.7 L484.2 206.5 L482.8 207.3 L480.2 202.8 L478.5 197.0ZM493.3 210.2 L494.7 215.7 L495.3 222.1 L493.9 223.9 L493.0 218.6 L492.2 212.8Z" fill="url(#wvdst)" stroke="#c6cfdb" stroke-width="0.6"/>
</g></svg>
<div style="position:absolute;left:16px;top:915px;width:728px;height:371px;overflow:hidden"><div style="position:absolute;left:-16px;top:-915px;width:1577px;height:1750px">
<div class="t" style="left:69.0px;top:915.5px;font-size:13.2px;line-height:13px;font-weight:700;color:#404040;transform:translateX(-50%);text-shadow:0 0 2px #fff,0 0 2px #fff,0 0 3px #fff">NORTH</div>
<div class="t" style="left:69.0px;top:932.5px;font-size:13.2px;line-height:13px;font-weight:700;color:#404040;transform:translateX(-50%);text-shadow:0 0 2px #fff,0 0 2px #fff,0 0 3px #fff">AMERICA</div>
<div class="t" style="left:632.5px;top:923.5px;font-size:13.2px;line-height:13px;font-weight:700;color:#404040;transform:translateX(-50%);text-shadow:0 0 2px #fff,0 0 2px #fff,0 0 3px #fff">ASIA</div>
<div class="t" style="left:429.5px;top:1060.5px;font-size:13.2px;line-height:13px;font-weight:700;color:#404040;transform:translateX(-50%);text-shadow:0 0 2px #fff,0 0 2px #fff,0 0 3px #fff">AFRICA</div>
<div class="t" style="left:205.0px;top:1146.0px;font-size:13.2px;line-height:13px;font-weight:700;color:#404040;transform:translateX(-50%);text-shadow:0 0 2px #fff,0 0 2px #fff,0 0 3px #fff">SOUTH</div>
<div class="t" style="left:205.5px;top:1163.2px;font-size:13.2px;line-height:13px;font-weight:700;color:#404040;transform:translateX(-50%);text-shadow:0 0 2px #fff,0 0 2px #fff,0 0 3px #fff">AMERICA</div>
<div class="t" style="left:771.5px;top:1146.5px;font-size:13.2px;line-height:13px;font-weight:700;color:#404040;transform:translateX(-50%);text-shadow:0 0 2px #fff,0 0 2px #fff,0 0 3px #fff">OCEANIA</div>
<div style="position:absolute;left:27px;top:925px;width:30px;height:60px;background:#fff;border-radius:4px;box-shadow:0 1px 2px rgba(0,0,0,0.15),0 2px 4px rgba(0,0,0,0.08)"></div>
<div style="position:absolute;left:27px;top:954.5px;width:30px;height:1px;background:#d3dae6"></div>
<div style="position:absolute;left:27px;top:995px;width:30px;height:30px;background:#fff;border-radius:4px;box-shadow:0 1px 2px rgba(0,0,0,0.15),0 2px 4px rgba(0,0,0,0.08)"></div>
<div style="position:absolute;left:27px;top:1035px;width:30px;height:60px;background:#fff;border-radius:4px;box-shadow:0 1px 2px rgba(0,0,0,0.15),0 2px 4px rgba(0,0,0,0.08)"></div>
<div style="position:absolute;left:27px;top:1064.5px;width:30px;height:1px;background:#d3dae6"></div>
<svg style="left:27px;top:925px" width="30" height="170" viewBox="0 0 30 170">
<circle cx="14.4" cy="14.3" r="7.4" fill="#343741"/><path d="M14.4 10.2 V18.4 M10.3 14.3 H18.5" stroke="#fff" stroke-width="1.3"/>
<circle cx="14.4" cy="44.4" r="7.4" fill="#343741"/><path d="M10.3 44.4 H18.5" stroke="#fff" stroke-width="1.3"/>
<path d="M11.5 79.5 V89.5 H21.5 M9.5 81.5 H19.5 V91.5 M19.5 79.5 L18.5 80.5 M11.5 89.5 L10 91" fill="none" stroke="#343741" stroke-width="1.5"/><path d="M13 88 L18 83" stroke="#343741" stroke-width="0.8"/>
<path d="M14.4 118.6 L20 122.6 L18 129 L11 129 L9 122.6 Z" fill="#343741"/>
<rect x="10" y="149" width="9.7" height="9.5" fill="#343741"/>
</svg>
<div style="position:absolute;left:416px;top:1270px;width:323px;height:14px;background:rgba(255,255,255,0.75)"></div>
<div class="t r" style="right:838.0px;top:1271.8px;font-size:11px;line-height:11px;color:#343741;letter-spacing:-0.027px;">OpenStreetMap contributors, OpenMapTiles, Elastic Maps Service</div>
<div style="position:absolute;left:692.0px;top:1173px;width:41px;height:86px;border-radius:4px;background:rgba(255,255,255,0.85);box-shadow:0 1px 3px rgba(0,0,0,0.12),0 3px 6px rgba(0,0,0,0.06)"></div>
<svg style="left:699.0px;top:1183px" width="12" height="12"><circle cx="6" cy="6" r="4.8" fill="#ffd874" stroke="#e2b043" stroke-width="1"/></svg>
<div style="position:absolute;left:717px;top:1189.2px;width:5.5px;height:1.3px;background:#69707d"></div>
<svg style="left:699.0px;top:1200.8px" width="12" height="12"><circle cx="6" cy="6" r="4.8" fill="#fb9a3e" stroke="#de7a22" stroke-width="1"/></svg>
<div style="position:absolute;left:717px;top:1207.0px;width:5.5px;height:1.3px;background:#69707d"></div>
<svg style="left:699.0px;top:1218px" width="12" height="12"><circle cx="6" cy="6" r="4.8" fill="#fc4e26" stroke="#d93617" stroke-width="1"/></svg>
<div style="position:absolute;left:717px;top:1224.2px;width:5.5px;height:1.3px;background:#69707d"></div>
<svg style="left:699.0px;top:1235.2px" width="12" height="12"><circle cx="6" cy="6" r="4.8" fill="#7c0026" stroke="#560018" stroke-width="1"/></svg>
<div style="position:absolute;left:717px;top:1241.4px;width:5.5px;height:1.3px;background:#69707d"></div>
</div></div>
<div style="position:absolute;left:769px;top:915px;width:791px;height:371px;overflow:hidden"><div style="position:absolute;left:-769px;top:-915px;width:1577px;height:1750px">
<div class="t" style="left:855.0px;top:915.5px;font-size:13.2px;line-height:13px;font-weight:700;color:#404040;transform:translateX(-50%);text-shadow:0 0 2px #fff,0 0 2px #fff,0 0 3px #fff">NORTH</div>
<div class="t" style="left:855.0px;top:932.5px;font-size:13.2px;line-height:13px;font-weight:700;color:#404040;transform:translateX(-50%);text-shadow:0 0 2px #fff,0 0 2px #fff,0 0 3px #fff">AMERICA</div>
<div class="t" style="left:1418.5px;top:923.5px;font-size:13.2px;line-height:13px;font-weight:700;color:#404040;transform:translateX(-50%);text-shadow:0 0 2px #fff,0 0 2px #fff,0 0 3px #fff">ASIA</div>
<div class="t" style="left:1215.5px;top:1060.5px;font-size:13.2px;line-height:13px;font-weight:700;color:#404040;transform:translateX(-50%);text-shadow:0 0 2px #fff,0 0 2px #fff,0 0 3px #fff">AFRICA</div>
<div class="t" style="left:991.0px;top:1146.0px;font-size:13.2px;line-height:13px;font-weight:700;color:#404040;transform:translateX(-50%);text-shadow:0 0 2px #fff,0 0 2px #fff,0 0 3px #fff">SOUTH</div>
<div class="t" style="left:991.5px;top:1163.2px;font-size:13.2px;line-height:13px;font-weight:700;color:#404040;transform:translateX(-50%);text-shadow:0 0 2px #fff,0 0 2px #fff,0 0 3px #fff">AMERICA</div>
<div class="t" style="left:1557.5px;top:1146.5px;font-size:13.2px;line-height:13px;font-weight:700;color:#404040;transform:translateX(-50%);text-shadow:0 0 2px #fff,0 0 2px #fff,0 0 3px #fff">OCEANIA</div>
<div style="position:absolute;left:780px;top:925px;width:30px;height:60px;background:#fff;border-radius:4px;box-shadow:0 1px 2px rgba(0,0,0,0.15),0 2px 4px rgba(0,0,0,0.08)"></div>
<div style="position:absolute;left:780px;top:954.5px;width:30px;height:1px;background:#d3dae6"></div>
<div style="position:absolute;left:780px;top:995px;width:30px;height:30px;background:#fff;border-radius:4px;box-shadow:0 1px 2px rgba(0,0,0,0.15),0 2px 4px rgba(0,0,0,0.08)"></div>
<div style="position:absolute;left:780px;top:1035px;width:30px;height:60px;background:#fff;border-radius:4px;box-shadow:0 1px 2px rgba(0,0,0,0.15),0 2px 4px rgba(0,0,0,0.08)"></div>
<div style="position:absolute;left:780px;top:1064.5px;width:30px;height:1px;background:#d3dae6"></div>
<svg style="left:780px;top:925px" width="30" height="170" viewBox="0 0 30 170">
<circle cx="14.4" cy="14.3" r="7.4" fill="#343741"/><path d="M14.4 10.2 V18.4 M10.3 14.3 H18.5" stroke="#fff" stroke-width="1.3"/>
<circle cx="14.4" cy="44.4" r="7.4" fill="#343741"/><path d="M10.3 44.4 H18.5" stroke="#fff" stroke-width="1.3"/>
<path d="M11.5 79.5 V89.5 H21.5 M9.5 81.5 H19.5 V91.5 M19.5 79.5 L18.5 80.5 M11.5 89.5 L10 91" fill="none" stroke="#343741" stroke-width="1.5"/><path d="M13 88 L18 83" stroke="#343741" stroke-width="0.8"/>
<path d="M14.4 118.6 L20 122.6 L18 129 L11 129 L9 122.6 Z" fill="#343741"/>
<rect x="10" y="149" width="9.7" height="9.5" fill="#343741"/>
</svg>
<div style="position:absolute;left:1232px;top:1270px;width:323px;height:14px;background:rgba(255,255,255,0.75)"></div>
<div class="t r" style="right:22.0px;top:1271.8px;font-size:11px;line-height:11px;color:#343741;letter-spacing:-0.027px;">OpenStreetMap contributors, OpenMapTiles, Elastic Maps Service</div>
<div style="position:absolute;left:1485.5px;top:1157px;width:64px;height:102px;border-radius:4px;background:rgba(255,255,255,0.85);box-shadow:0 1px 3px rgba(0,0,0,0.12),0 3px 6px rgba(0,0,0,0.06)"></div>
<div class="t" style="left:1493.6px;top:1167.6px;font-size:11px;line-height:11px;font-weight:700;color:#69707d;letter-spacing:0.759px;">Count</div>
<svg style="left:1492.0px;top:1183px" width="12" height="12"><circle cx="6" cy="6" r="4.8" fill="#ffd874" stroke="#e2b043" stroke-width="1"/></svg>
<div class="t r" style="left:1507.3px;top:1184.1px;font-size:11px;line-height:11px;color:#535966;letter-spacing:-0.35px;">4 – 7</div>
<svg style="left:1492.0px;top:1200.8px" width="12" height="12"><circle cx="6" cy="6" r="4.8" fill="#fb9a3e" stroke="#de7a22" stroke-width="1"/></svg>
<div class="t r" style="left:1507.3px;top:1201.9px;font-size:11px;line-height:11px;color:#535966;letter-spacing:-0.35px;">7 – 10</div>
<svg style="left:1492.0px;top:1218px" width="12" height="12"><circle cx="6" cy="6" r="4.8" fill="#fc4e26" stroke="#d93617" stroke-width="1"/></svg>
<div class="t r" style="left:1507.3px;top:1219.1px;font-size:11px;line-height:11px;color:#535966;letter-spacing:-0.35px;">10 – 13</div>
<svg style="left:1492.0px;top:1235.2px" width="12" height="12"><circle cx="6" cy="6" r="4.8" fill="#7c0026" stroke="#560018" stroke-width="1"/></svg>
<div class="t r" style="left:1507.3px;top:1236.3px;font-size:11px;line-height:11px;color:#535966;letter-spacing:-0.35px;">13 – 16</div>
</div></div>
<svg style="left:940px;top:905px" width="240" height="80"><circle cx="23" cy="61.4" r="10" fill="#a0385a" stroke="#4b0c1e" stroke-width="1.4"/><circle cx="225" cy="22.3" r="5" fill="#ffdd88" stroke="#d1a43a" stroke-width="1.2"/></svg>
<div class="t" style="left:17.0px;top:1308.9px;font-size:12px;line-height:12px;font-weight:700;color:#1a1c21;letter-spacing:0.125px;">Alerts [Filebeat Suricata]</div>
<div class="t r" style="right:97.7px;top:1339.2px;font-size:16px;line-height:16px;color:#69707d;letter-spacing:0.131px;">1–22 of 22</div>
<div style="position:absolute;left:1490px;top:1331px;width:35px;height:30px;background:#f5f7fa;border-radius:4px"></div>
<div style="position:absolute;left:1529px;top:1331px;width:35px;height:30px;background:#f5f7fa;border-radius:4px"></div>
<svg style="left:1490px;top:1331px" width="74" height="30"><polyline points="21,9.2 15,15.5 21,21.8" fill="none" stroke="#98a2b3" stroke-width="2.6"/><polyline points="53,9.2 59,15.5 53,21.8" fill="none" stroke="#98a2b3" stroke-width="2.6"/></svg>
<div class="t" style="left:41.1px;top:1371.7px;font-size:12px;line-height:12px;font-weight:700;color:#343741;letter-spacing:0.003px;">Time</div>
<div class="t" style="left:219.5px;top:1371.7px;font-size:12px;line-height:12px;font-weight:700;color:#343741;letter-spacing:0.111px;">host.name</div>
<div class="t" style="left:348.8px;top:1371.7px;font-size:12px;line-height:12px;font-weight:700;color:#343741;letter-spacing:0.151px;">rule.name</div>
<div class="t" style="left:532.8px;top:1371.7px;font-size:12px;line-height:12px;font-weight:700;color:#343741;letter-spacing:0.106px;">source.ip</div>
<div class="t" style="left:652.1px;top:1371.7px;font-size:12px;line-height:12px;font-weight:700;color:#343741;letter-spacing:0.219px;">source.port</div>
<div class="t" style="left:785.8px;top:1371.7px;font-size:12px;line-height:12px;font-weight:700;color:#343741;letter-spacing:0.1px;">destination.ip</div>
<div class="t" style="left:930.5px;top:1371.7px;font-size:12px;line-height:12px;font-weight:700;color:#343741;letter-spacing:0.176px;">destination.port</div>
<div class="t" style="left:1089.5px;top:1371.7px;font-size:12px;line-height:12px;font-weight:700;color:#343741;letter-spacing:0.033px;">source.geo.country_iso_code</div>
<div class="t" style="left:1326.0px;top:1371.7px;font-size:12px;line-height:12px;font-weight:700;color:#343741;letter-spacing:0.058px;">destination.geo.country_iso_code</div>
<svg style="left:73px;top:1376px" width="10" height="7"><path d="M0.5 1.2 H8.5 L4.5 5.5 Z" fill="#006bb4"/></svg>
<svg style="left:16px;top:1404.5px" width="10" height="12"><polyline points="2.3,1.6 6.9,5.9 2.4,10.2" fill="none" stroke="#343741" stroke-width="0.95"/></svg>
<div class="t r" style="left:41.1px;top:1404.6px;font-size:12px;line-height:12px;color:#343741;letter-spacing:0.161px;">Jun 26, 2020 @ 11:00:03.342</div>
<div class="t r" style="left:219.5px;top:1404.6px;font-size:12px;line-height:12px;color:#343741;letter-spacing:0.102px;">mac15.data.va.local.</div>
<div class="t r" style="left:219.5px;top:1422.6px;font-size:12px;line-height:12px;color:#343741;letter-spacing:0.423px;">crowbird.com</div>
<div class="t r" style="left:348.8px;top:1404.6px;font-size:12px;line-height:12px;color:#343741;letter-spacing:0.053px;">SURICATA TLS on unusual po</div>
<div class="t r" style="left:348.8px;top:1422.6px;font-size:12px;line-height:12px;color:#343741;">rt</div>
<div class="t r" style="left:532.8px;top:1404.6px;font-size:12px;line-height:12px;color:#343741;letter-spacing:-0.309px;">10.137.3.54</div>
<div class="t r" style="left:652.1px;top:1404.6px;font-size:12px;line-height:12px;color:#343741;letter-spacing:0.958px;">64389</div>
<div class="t r" style="left:785.8px;top:1404.6px;font-size:12px;line-height:12px;color:#343741;letter-spacing:-0.199px;">10.128.2.48</div>
<div class="t r" style="left:930.5px;top:1404.6px;font-size:12px;line-height:12px;color:#343741;letter-spacing:0.869px;">8443</div>
<div class="t r" style="left:1093.0px;top:1404.6px;font-size:12px;line-height:12px;color:#343741;">-</div>
<div class="t r" style="left:1329.5px;top:1404.6px;font-size:12px;line-height:12px;color:#343741;">-</div>
<svg style="left:16px;top:1459.7px" width="10" height="12"><polyline points="2.3,1.6 6.9,5.9 2.4,10.2" fill="none" stroke="#343741" stroke-width="0.95"/></svg>
<div class="t r" style="left:41.1px;top:1459.8px;font-size:12px;line-height:12px;color:#343741;letter-spacing:0.114px;">Oct 4, 2018 @ 05:35:01.575</div>
<div class="t r" style="left:219.5px;top:1459.8px;font-size:12px;line-height:12px;color:#343741;letter-spacing:0.102px;">mac15.data.va.local.</div>
<div class="t r" style="left:219.5px;top:1477.0px;font-size:12px;line-height:12px;color:#343741;letter-spacing:0.423px;">crowbird.com</div>
<div class="t r" style="left:348.8px;top:1459.8px;font-size:12px;line-height:12px;color:#343741;letter-spacing:-0.015px;">ET POLICY GNU/Linux APT U</div>
<div class="t r" style="left:348.8px;top:1477.0px;font-size:12px;line-height:12px;color:#343741;letter-spacing:0.309px;">ser-Agent Outbound likely rel</div>
<div class="t r" style="left:348.8px;top:1494.2px;font-size:12px;line-height:12px;color:#343741;letter-spacing:0.337px;">ated to package management</div>
<div class="t r" style="left:532.8px;top:1459.8px;font-size:12px;line-height:12px;color:#343741;letter-spacing:-0.486px;">192.168.1.146</div>
<div class="t r" style="left:652.1px;top:1459.8px;font-size:12px;line-height:12px;color:#343741;letter-spacing:0.883px;">52340</div>
<div class="t r" style="left:785.8px;top:1459.8px;font-size:12px;line-height:12px;color:#343741;letter-spacing:-0.206px;">91.189.91.23</div>
<div class="t r" style="left:930.5px;top:1459.8px;font-size:12px;line-height:12px;color:#343741;">80</div>
<div class="t r" style="left:1093.0px;top:1459.8px;font-size:12px;line-height:12px;color:#343741;">-</div>
<div class="t r" style="left:1326.0px;top:1459.8px;font-size:12px;line-height:12px;color:#343741;">US</div>
<svg style="left:16px;top:1531.2px" width="10" height="12"><polyline points="2.3,1.6 6.9,5.9 2.4,10.2" fill="none" stroke="#343741" stroke-width="0.95"/></svg>
<div class="t r" style="left:41.1px;top:1531.3px;font-size:12px;line-height:12px;color:#343741;letter-spacing:0.134px;">Oct 4, 2018 @ 05:35:01.362</div>
<div class="t r" style="left:219.5px;top:1531.3px;font-size:12px;line-height:12px;color:#343741;letter-spacing:0.102px;">mac15.data.va.local.</div>
<div class="t r" style="left:219.5px;top:1548.5px;font-size:12px;line-height:12px;color:#343741;letter-spacing:0.423px;">crowbird.com</div>
<div class="t r" style="left:348.8px;top:1531.3px;font-size:12px;line-height:12px;color:#343741;letter-spacing:-0.015px;">ET POLICY GNU/Linux APT U</div>
<div class="t r" style="left:348.8px;top:1548.5px;font-size:12px;line-height:12px;color:#343741;letter-spacing:0.309px;">ser-Agent Outbound likely rel</div>
<div class="t r" style="left:348.8px;top:1565.7px;font-size:12px;line-height:12px;color:#343741;letter-spacing:0.337px;">ated to package management</div>
<div class="t r" style="left:532.8px;top:1531.3px;font-size:12px;line-height:12px;color:#343741;letter-spacing:-0.486px;">192.168.1.146</div>
<div class="t r" style="left:652.1px;top:1531.3px;font-size:12px;line-height:12px;color:#343741;letter-spacing:0.883px;">52340</div>
<div class="t r" style="left:785.8px;top:1531.3px;font-size:12px;line-height:12px;color:#343741;letter-spacing:-0.206px;">91.189.91.23</div>
<div class="t r" style="left:930.5px;top:1531.3px;font-size:12px;line-height:12px;color:#343741;">80</div>
<div class="t r" style="left:1093.0px;top:1531.3px;font-size:12px;line-height:12px;color:#343741;">-</div>
<div class="t r" style="left:1326.0px;top:1531.3px;font-size:12px;line-height:12px;color:#343741;">US</div>
<svg style="left:16px;top:1602.7px" width="10" height="12"><polyline points="2.3,1.6 6.9,5.9 2.4,10.2" fill="none" stroke="#343741" stroke-width="0.95"/></svg>
<div class="t r" style="left:41.1px;top:1602.8px;font-size:12px;line-height:12px;color:#343741;letter-spacing:0.198px;">Oct 4, 2018 @ 05:35:00.897</div>
<div class="t r" style="left:219.5px;top:1602.8px;font-size:12px;line-height:12px;color:#343741;letter-spacing:0.102px;">mac15.data.va.local.</div>
<div class="t r" style="left:219.5px;top:1620.0px;font-size:12px;line-height:12px;color:#343741;letter-spacing:0.423px;">crowbird.com</div>
<div class="t r" style="left:348.8px;top:1602.8px;font-size:12px;line-height:12px;color:#343741;letter-spacing:-0.015px;">ET POLICY GNU/Linux APT U</div>
<div class="t r" style="left:348.8px;top:1620.0px;font-size:12px;line-height:12px;color:#343741;letter-spacing:0.309px;">ser-Agent Outbound likely rel</div>
<div class="t r" style="left:348.8px;top:1637.2px;font-size:12px;line-height:12px;color:#343741;letter-spacing:0.337px;">ated to package management</div>
<div class="t r" style="left:532.8px;top:1602.8px;font-size:12px;line-height:12px;color:#343741;letter-spacing:-0.486px;">192.168.1.146</div>
<div class="t r" style="left:652.1px;top:1602.8px;font-size:12px;line-height:12px;color:#343741;letter-spacing:0.883px;">52340</div>
<div class="t r" style="left:785.8px;top:1602.8px;font-size:12px;line-height:12px;color:#343741;letter-spacing:-0.206px;">91.189.91.23</div>
<div class="t r" style="left:930.5px;top:1602.8px;font-size:12px;line-height:12px;color:#343741;">80</div>
<div class="t r" style="left:1093.0px;top:1602.8px;font-size:12px;line-height:12px;color:#343741;">-</div>
<div class="t r" style="left:1326.0px;top:1602.8px;font-size:12px;line-height:12px;color:#343741;">US</div>
<svg style="left:16px;top:1674.6px" width="10" height="12"><polyline points="2.3,1.6 6.9,5.9 2.4,10.2" fill="none" stroke="#343741" stroke-width="0.95"/></svg>
<div class="t r" style="left:41.1px;top:1674.7px;font-size:12px;line-height:12px;color:#343741;letter-spacing:0.198px;">Oct 4, 2018 @ 05:35:00.776</div>
<div class="t r" style="left:219.5px;top:1674.7px;font-size:12px;line-height:12px;color:#343741;letter-spacing:0.102px;">mac15.data.va.local.</div>
<div class="t r" style="left:219.5px;top:1691.9px;font-size:12px;line-height:12px;color:#343741;letter-spacing:0.423px;">crowbird.com</div>
<div class="t r" style="left:348.8px;top:1674.7px;font-size:12px;line-height:12px;color:#343741;letter-spacing:-0.015px;">ET POLICY GNU/Linux APT U</div>
<div class="t r" style="left:348.8px;top:1691.9px;font-size:12px;line-height:12px;color:#343741;letter-spacing:0.309px;">ser-Agent Outbound likely rel</div>
<div class="t r" style="left:348.8px;top:1709.1px;font-size:12px;line-height:12px;color:#343741;letter-spacing:0.337px;">ated to package management</div>
<div class="t r" style="left:532.8px;top:1674.7px;font-size:12px;line-height:12px;color:#343741;letter-spacing:-0.486px;">192.168.1.146</div>
<div class="t r" style="left:652.1px;top:1674.7px;font-size:12px;line-height:12px;color:#343741;letter-spacing:0.883px;">52340</div>
<div class="t r" style="left:785.8px;top:1674.7px;font-size:12px;line-height:12px;color:#343741;letter-spacing:-0.206px;">91.189.91.23</div>
<div class="t r" style="left:930.5px;top:1674.7px;font-size:12px;line-height:12px;color:#343741;">80</div>
<div class="t r" style="left:1093.0px;top:1674.7px;font-size:12px;line-height:12px;color:#343741;">-</div>
<div class="t r" style="left:1326.0px;top:1674.7px;font-size:12px;line-height:12px;color:#343741;">US</div>
<div style="position:absolute;left:9px;top:1448px;width:1559px;height:1px;background:#d3dae6"></div>
<div style="position:absolute;left:9px;top:1591px;width:1559px;height:1px;background:#d3dae6"></div>
<div style="position:absolute;left:9px;top:1663px;width:1559px;height:1px;background:#d3dae6"></div>
</body></html>
